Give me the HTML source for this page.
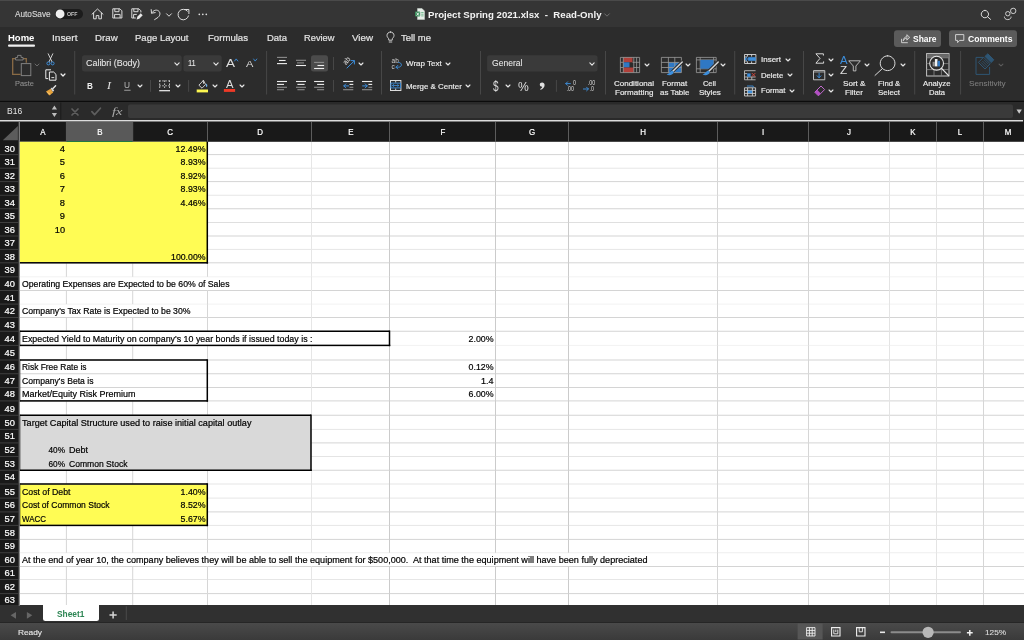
<!DOCTYPE html>
<html><head><meta charset="utf-8"><title>Project Spring 2021.xlsx</title><style>
html,body{margin:0;padding:0;background:#262626;}
body{width:1024px;height:640px;position:relative;overflow:hidden;font-family:"Liberation Sans",sans-serif;}
#r{position:absolute;left:0;top:0;width:1024px;height:640px;overflow:hidden;will-change:transform;}
#r>div,#r>svg,#r>span{position:absolute;display:block;}
.t{line-height:1;white-space:pre;}
svg{overflow:visible;}
</style></head><body><div id="r">
<svg style="left:0;top:0" width="1024" height="640" viewBox="0 0 1024 640"><rect x="0" y="0" width="1024" height="27" fill="#353535"/><rect x="0" y="0" width="1024" height="1" fill="#4a4a4a"/><rect x="0" y="27" width="1024" height="74" fill="#2c2c2c"/><rect x="0" y="100.8" width="1024" height="1.8" fill="#0c0c0c"/><rect x="0" y="102" width="1024" height="18" fill="#2a2a2a"/><rect x="0" y="120" width="1023" height="2.1" fill="#dcdcdc"/><rect x="0" y="121.5" width="1024" height="20.3" fill="#191919"/><rect x="0" y="141.5" width="19.5" height="464" fill="#191919"/><rect x="19.5" y="141.8" width="1005" height="463.2" fill="#ffffff"/><rect x="0" y="605" width="1024" height="18" fill="#303030"/><rect x="0" y="622.4" width="1024" height="1" fill="#202020"/></svg>
<div style="left:0px;top:623.3px;width:1024px;height:17px;background:#3b3b3b;background:linear-gradient(#4a4a4a,#3a3a3a);"></div>
<svg style="left:0;top:0" width="1024" height="640" viewBox="0 0 1024 640"><rect x="19.5" y="141.8" width="187.8" height="121.0" fill="#fffc54"/><rect x="19.5" y="415.25" width="291.5" height="55.0" fill="#d9d9d9"/><rect x="19.5" y="484" width="187.8" height="41.4" fill="#fffc54"/><rect x="207.3" y="154.1" width="103.9" height="1" fill="#d4d4d4"/><rect x="311.2" y="154.1" width="712.8" height="1" fill="#d4d4d4"/><rect x="207.3" y="167.7" width="103.9" height="1" fill="#e6e6e6"/><rect x="311.2" y="167.7" width="712.8" height="1" fill="#e6e6e6"/><rect x="207.3" y="181.1" width="103.9" height="1" fill="#d4d4d4"/><rect x="311.2" y="181.1" width="712.8" height="1" fill="#d4d4d4"/><rect x="207.3" y="194.75" width="103.9" height="1" fill="#e6e6e6"/><rect x="311.2" y="194.75" width="712.8" height="1" fill="#e6e6e6"/><rect x="207.3" y="208.25" width="103.9" height="1" fill="#d4d4d4"/><rect x="311.2" y="208.25" width="712.8" height="1" fill="#d4d4d4"/><rect x="207.3" y="222.0" width="103.9" height="1" fill="#dfdfdf"/><rect x="311.2" y="222.0" width="712.8" height="1" fill="#dfdfdf"/><rect x="207.3" y="235.5" width="103.9" height="1" fill="#d4d4d4"/><rect x="311.2" y="235.5" width="712.8" height="1" fill="#d4d4d4"/><rect x="207.3" y="248.9" width="103.9" height="1" fill="#e6e6e6"/><rect x="311.2" y="248.9" width="712.8" height="1" fill="#e6e6e6"/><rect x="19.5" y="262.3" width="187.8" height="1" fill="#d4d4d4"/><rect x="207.3" y="262.3" width="103.9" height="1" fill="#d4d4d4"/><rect x="311.2" y="262.3" width="712.8" height="1" fill="#d4d4d4"/><rect x="19.5" y="276.3" width="187.8" height="1" fill="#f2f2f2"/><rect x="207.3" y="276.3" width="103.9" height="1" fill="#f2f2f2"/><rect x="311.2" y="276.3" width="712.8" height="1" fill="#f2f2f2"/><rect x="19.5" y="290.0" width="187.8" height="1" fill="#d4d4d4"/><rect x="207.3" y="290.0" width="103.9" height="1" fill="#d4d4d4"/><rect x="311.2" y="290.0" width="712.8" height="1" fill="#d4d4d4"/><rect x="19.5" y="303.6" width="187.8" height="1" fill="#f2f2f2"/><rect x="207.3" y="303.6" width="103.9" height="1" fill="#f2f2f2"/><rect x="311.2" y="303.6" width="712.8" height="1" fill="#f2f2f2"/><rect x="19.5" y="317.0" width="187.8" height="1" fill="#d4d4d4"/><rect x="207.3" y="317.0" width="103.9" height="1" fill="#d4d4d4"/><rect x="311.2" y="317.0" width="712.8" height="1" fill="#d4d4d4"/><rect x="19.5" y="330.75" width="187.8" height="1" fill="#d4d4d4"/><rect x="207.3" y="330.75" width="103.9" height="1" fill="#d4d4d4"/><rect x="311.2" y="330.75" width="712.8" height="1" fill="#d4d4d4"/><rect x="19.5" y="344.9" width="187.8" height="1" fill="#f2f2f2"/><rect x="207.3" y="344.9" width="103.9" height="1" fill="#f2f2f2"/><rect x="311.2" y="344.9" width="712.8" height="1" fill="#f2f2f2"/><rect x="19.5" y="359.5" width="187.8" height="1" fill="#d4d4d4"/><rect x="207.3" y="359.5" width="103.9" height="1" fill="#d4d4d4"/><rect x="311.2" y="359.5" width="712.8" height="1" fill="#d4d4d4"/><rect x="19.5" y="373.25" width="187.8" height="1" fill="#d4d4d4"/><rect x="207.3" y="373.25" width="103.9" height="1" fill="#d4d4d4"/><rect x="311.2" y="373.25" width="712.8" height="1" fill="#d4d4d4"/><rect x="19.5" y="387.0" width="187.8" height="1" fill="#d4d4d4"/><rect x="207.3" y="387.0" width="103.9" height="1" fill="#d4d4d4"/><rect x="311.2" y="387.0" width="712.8" height="1" fill="#d4d4d4"/><rect x="19.5" y="400.4" width="187.8" height="1" fill="#d4d4d4"/><rect x="207.3" y="400.4" width="103.9" height="1" fill="#d4d4d4"/><rect x="311.2" y="400.4" width="712.8" height="1" fill="#d4d4d4"/><rect x="19.5" y="414.75" width="187.8" height="1" fill="#d4d4d4"/><rect x="207.3" y="414.75" width="103.9" height="1" fill="#d4d4d4"/><rect x="311.2" y="414.75" width="712.8" height="1" fill="#d4d4d4"/><rect x="311.2" y="428.9" width="712.8" height="1" fill="#e6e6e6"/><rect x="311.2" y="442.4" width="712.8" height="1" fill="#d4d4d4"/><rect x="311.2" y="456.0" width="712.8" height="1" fill="#e4e4e4"/><rect x="19.5" y="469.75" width="187.8" height="1" fill="#d4d4d4"/><rect x="207.3" y="469.75" width="103.9" height="1" fill="#d4d4d4"/><rect x="311.2" y="469.75" width="712.8" height="1" fill="#d4d4d4"/><rect x="19.5" y="483.5" width="187.8" height="1" fill="#e6e6e6"/><rect x="207.3" y="483.5" width="103.9" height="1" fill="#e6e6e6"/><rect x="311.2" y="483.5" width="712.8" height="1" fill="#e6e6e6"/><rect x="207.3" y="497.6" width="103.9" height="1" fill="#e6e6e6"/><rect x="311.2" y="497.6" width="712.8" height="1" fill="#e6e6e6"/><rect x="207.3" y="511.4" width="103.9" height="1" fill="#d4d4d4"/><rect x="311.2" y="511.4" width="712.8" height="1" fill="#d4d4d4"/><rect x="19.5" y="524.9" width="187.8" height="1" fill="#e6e6e6"/><rect x="207.3" y="524.9" width="103.9" height="1" fill="#e6e6e6"/><rect x="311.2" y="524.9" width="712.8" height="1" fill="#e6e6e6"/><rect x="19.5" y="538.9" width="187.8" height="1" fill="#d4d4d4"/><rect x="207.3" y="538.9" width="103.9" height="1" fill="#d4d4d4"/><rect x="311.2" y="538.9" width="712.8" height="1" fill="#d4d4d4"/><rect x="19.5" y="552.25" width="187.8" height="1" fill="#eeeeee"/><rect x="207.3" y="552.25" width="103.9" height="1" fill="#eeeeee"/><rect x="311.2" y="552.25" width="712.8" height="1" fill="#eeeeee"/><rect x="19.5" y="566.0" width="187.8" height="1" fill="#d4d4d4"/><rect x="207.3" y="566.0" width="103.9" height="1" fill="#d4d4d4"/><rect x="311.2" y="566.0" width="712.8" height="1" fill="#d4d4d4"/><rect x="19.5" y="579.0" width="187.8" height="1" fill="#e6e6e6"/><rect x="207.3" y="579.0" width="103.9" height="1" fill="#e6e6e6"/><rect x="311.2" y="579.0" width="712.8" height="1" fill="#e6e6e6"/><rect x="19.5" y="593.1" width="187.8" height="1" fill="#d4d4d4"/><rect x="207.3" y="593.1" width="103.9" height="1" fill="#d4d4d4"/><rect x="311.2" y="593.1" width="712.8" height="1" fill="#d4d4d4"/><rect x="65.9" y="262.8" width="1" height="14.0" fill="#d6d6d6"/><rect x="65.9" y="290.5" width="1" height="13.6" fill="#d6d6d6"/><rect x="65.9" y="317.5" width="1" height="13.75" fill="#d6d6d6"/><rect x="65.9" y="345.4" width="1" height="14.6" fill="#d6d6d6"/><rect x="65.9" y="400.9" width="1" height="14.35" fill="#d6d6d6"/><rect x="65.9" y="470.25" width="1" height="13.75" fill="#d6d6d6"/><rect x="65.9" y="525.4" width="1" height="14.0" fill="#d6d6d6"/><rect x="65.9" y="539.4" width="1" height="13.35" fill="#d6d6d6"/><rect x="65.9" y="566.5" width="1" height="13.0" fill="#d6d6d6"/><rect x="65.9" y="579.5" width="1" height="14.1" fill="#d6d6d6"/><rect x="65.9" y="593.6" width="1" height="11.4" fill="#d6d6d6"/><rect x="132.2" y="262.8" width="1" height="14.0" fill="#d6d6d6"/><rect x="132.2" y="290.5" width="1" height="13.6" fill="#d6d6d6"/><rect x="132.2" y="317.5" width="1" height="13.75" fill="#d6d6d6"/><rect x="132.2" y="345.4" width="1" height="14.6" fill="#d6d6d6"/><rect x="132.2" y="400.9" width="1" height="14.35" fill="#d6d6d6"/><rect x="132.2" y="470.25" width="1" height="13.75" fill="#d6d6d6"/><rect x="132.2" y="525.4" width="1" height="14.0" fill="#d6d6d6"/><rect x="132.2" y="539.4" width="1" height="13.35" fill="#d6d6d6"/><rect x="132.2" y="566.5" width="1" height="13.0" fill="#d6d6d6"/><rect x="132.2" y="579.5" width="1" height="14.1" fill="#d6d6d6"/><rect x="132.2" y="593.6" width="1" height="11.4" fill="#d6d6d6"/><rect x="207.0" y="262.8" width="1" height="14.0" fill="#d6d6d6"/><rect x="207.0" y="290.5" width="1" height="13.6" fill="#d6d6d6"/><rect x="207.0" y="304.1" width="1" height="13.4" fill="#d6d6d6"/><rect x="207.0" y="317.5" width="1" height="13.75" fill="#d6d6d6"/><rect x="207.0" y="345.4" width="1" height="14.6" fill="#d6d6d6"/><rect x="207.0" y="400.9" width="1" height="14.35" fill="#d6d6d6"/><rect x="207.0" y="470.25" width="1" height="13.75" fill="#d6d6d6"/><rect x="207.0" y="525.4" width="1" height="14.0" fill="#d6d6d6"/><rect x="207.0" y="539.4" width="1" height="13.35" fill="#d6d6d6"/><rect x="207.0" y="566.5" width="1" height="13.0" fill="#d6d6d6"/><rect x="207.0" y="579.5" width="1" height="14.1" fill="#d6d6d6"/><rect x="207.0" y="593.6" width="1" height="11.4" fill="#d6d6d6"/><rect x="311.0" y="141.8" width="1" height="12.8" fill="#e6e6e6"/><rect x="311.0" y="154.6" width="1" height="13.6" fill="#e6e6e6"/><rect x="311.0" y="168.2" width="1" height="13.4" fill="#e6e6e6"/><rect x="311.0" y="181.6" width="1" height="13.65" fill="#e6e6e6"/><rect x="311.0" y="195.25" width="1" height="13.5" fill="#e6e6e6"/><rect x="311.0" y="208.75" width="1" height="13.75" fill="#e6e6e6"/><rect x="311.0" y="222.5" width="1" height="13.5" fill="#e6e6e6"/><rect x="311.0" y="236" width="1" height="13.4" fill="#e6e6e6"/><rect x="311.0" y="249.4" width="1" height="13.4" fill="#e6e6e6"/><rect x="311.0" y="262.8" width="1" height="14.0" fill="#e6e6e6"/><rect x="311.0" y="276.8" width="1" height="13.7" fill="#e6e6e6"/><rect x="311.0" y="290.5" width="1" height="13.6" fill="#e6e6e6"/><rect x="311.0" y="304.1" width="1" height="13.4" fill="#e6e6e6"/><rect x="311.0" y="317.5" width="1" height="13.75" fill="#e6e6e6"/><rect x="311.0" y="345.4" width="1" height="14.6" fill="#e6e6e6"/><rect x="311.0" y="360" width="1" height="13.75" fill="#e6e6e6"/><rect x="311.0" y="373.75" width="1" height="13.75" fill="#e6e6e6"/><rect x="311.0" y="387.5" width="1" height="13.4" fill="#e6e6e6"/><rect x="311.0" y="400.9" width="1" height="14.35" fill="#e6e6e6"/><rect x="311.0" y="470.25" width="1" height="13.75" fill="#e6e6e6"/><rect x="311.0" y="484" width="1" height="14.1" fill="#e6e6e6"/><rect x="311.0" y="498.1" width="1" height="13.8" fill="#e6e6e6"/><rect x="311.0" y="511.9" width="1" height="13.5" fill="#e6e6e6"/><rect x="311.0" y="525.4" width="1" height="14.0" fill="#e6e6e6"/><rect x="311.0" y="539.4" width="1" height="13.35" fill="#e6e6e6"/><rect x="311.0" y="566.5" width="1" height="13.0" fill="#e6e6e6"/><rect x="311.0" y="579.5" width="1" height="14.1" fill="#e6e6e6"/><rect x="311.0" y="593.6" width="1" height="11.4" fill="#e6e6e6"/><rect x="389.0" y="141.8" width="1" height="12.8" fill="#cbcbcb"/><rect x="389.0" y="154.6" width="1" height="13.6" fill="#cbcbcb"/><rect x="389.0" y="168.2" width="1" height="13.4" fill="#cbcbcb"/><rect x="389.0" y="181.6" width="1" height="13.65" fill="#cbcbcb"/><rect x="389.0" y="195.25" width="1" height="13.5" fill="#cbcbcb"/><rect x="389.0" y="208.75" width="1" height="13.75" fill="#cbcbcb"/><rect x="389.0" y="222.5" width="1" height="13.5" fill="#cbcbcb"/><rect x="389.0" y="236" width="1" height="13.4" fill="#cbcbcb"/><rect x="389.0" y="249.4" width="1" height="13.4" fill="#cbcbcb"/><rect x="389.0" y="262.8" width="1" height="14.0" fill="#cbcbcb"/><rect x="389.0" y="276.8" width="1" height="13.7" fill="#cbcbcb"/><rect x="389.0" y="290.5" width="1" height="13.6" fill="#cbcbcb"/><rect x="389.0" y="304.1" width="1" height="13.4" fill="#cbcbcb"/><rect x="389.0" y="317.5" width="1" height="13.75" fill="#cbcbcb"/><rect x="389.0" y="345.4" width="1" height="14.6" fill="#cbcbcb"/><rect x="389.0" y="360" width="1" height="13.75" fill="#cbcbcb"/><rect x="389.0" y="373.75" width="1" height="13.75" fill="#cbcbcb"/><rect x="389.0" y="387.5" width="1" height="13.4" fill="#cbcbcb"/><rect x="389.0" y="400.9" width="1" height="14.35" fill="#cbcbcb"/><rect x="389.0" y="415.25" width="1" height="14.15" fill="#cbcbcb"/><rect x="389.0" y="429.4" width="1" height="13.5" fill="#cbcbcb"/><rect x="389.0" y="442.9" width="1" height="13.6" fill="#cbcbcb"/><rect x="389.0" y="456.5" width="1" height="13.75" fill="#cbcbcb"/><rect x="389.0" y="470.25" width="1" height="13.75" fill="#cbcbcb"/><rect x="389.0" y="484" width="1" height="14.1" fill="#cbcbcb"/><rect x="389.0" y="498.1" width="1" height="13.8" fill="#cbcbcb"/><rect x="389.0" y="511.9" width="1" height="13.5" fill="#cbcbcb"/><rect x="389.0" y="525.4" width="1" height="14.0" fill="#cbcbcb"/><rect x="389.0" y="539.4" width="1" height="13.35" fill="#cbcbcb"/><rect x="389.0" y="566.5" width="1" height="13.0" fill="#cbcbcb"/><rect x="389.0" y="579.5" width="1" height="14.1" fill="#cbcbcb"/><rect x="389.0" y="593.6" width="1" height="11.4" fill="#cbcbcb"/><rect x="495.0" y="141.8" width="1" height="12.8" fill="#cbcbcb"/><rect x="495.0" y="154.6" width="1" height="13.6" fill="#cbcbcb"/><rect x="495.0" y="168.2" width="1" height="13.4" fill="#cbcbcb"/><rect x="495.0" y="181.6" width="1" height="13.65" fill="#cbcbcb"/><rect x="495.0" y="195.25" width="1" height="13.5" fill="#cbcbcb"/><rect x="495.0" y="208.75" width="1" height="13.75" fill="#cbcbcb"/><rect x="495.0" y="222.5" width="1" height="13.5" fill="#cbcbcb"/><rect x="495.0" y="236" width="1" height="13.4" fill="#cbcbcb"/><rect x="495.0" y="249.4" width="1" height="13.4" fill="#cbcbcb"/><rect x="495.0" y="262.8" width="1" height="14.0" fill="#cbcbcb"/><rect x="495.0" y="276.8" width="1" height="13.7" fill="#cbcbcb"/><rect x="495.0" y="290.5" width="1" height="13.6" fill="#cbcbcb"/><rect x="495.0" y="304.1" width="1" height="13.4" fill="#cbcbcb"/><rect x="495.0" y="317.5" width="1" height="13.75" fill="#cbcbcb"/><rect x="495.0" y="331.25" width="1" height="14.15" fill="#cbcbcb"/><rect x="495.0" y="345.4" width="1" height="14.6" fill="#cbcbcb"/><rect x="495.0" y="360" width="1" height="13.75" fill="#cbcbcb"/><rect x="495.0" y="373.75" width="1" height="13.75" fill="#cbcbcb"/><rect x="495.0" y="387.5" width="1" height="13.4" fill="#cbcbcb"/><rect x="495.0" y="400.9" width="1" height="14.35" fill="#cbcbcb"/><rect x="495.0" y="415.25" width="1" height="14.15" fill="#cbcbcb"/><rect x="495.0" y="429.4" width="1" height="13.5" fill="#cbcbcb"/><rect x="495.0" y="442.9" width="1" height="13.6" fill="#cbcbcb"/><rect x="495.0" y="456.5" width="1" height="13.75" fill="#cbcbcb"/><rect x="495.0" y="470.25" width="1" height="13.75" fill="#cbcbcb"/><rect x="495.0" y="484" width="1" height="14.1" fill="#cbcbcb"/><rect x="495.0" y="498.1" width="1" height="13.8" fill="#cbcbcb"/><rect x="495.0" y="511.9" width="1" height="13.5" fill="#cbcbcb"/><rect x="495.0" y="525.4" width="1" height="14.0" fill="#cbcbcb"/><rect x="495.0" y="539.4" width="1" height="13.35" fill="#cbcbcb"/><rect x="495.0" y="566.5" width="1" height="13.0" fill="#cbcbcb"/><rect x="495.0" y="579.5" width="1" height="14.1" fill="#cbcbcb"/><rect x="495.0" y="593.6" width="1" height="11.4" fill="#cbcbcb"/><rect x="568.0" y="141.8" width="1" height="12.8" fill="#cbcbcb"/><rect x="568.0" y="154.6" width="1" height="13.6" fill="#cbcbcb"/><rect x="568.0" y="168.2" width="1" height="13.4" fill="#cbcbcb"/><rect x="568.0" y="181.6" width="1" height="13.65" fill="#cbcbcb"/><rect x="568.0" y="195.25" width="1" height="13.5" fill="#cbcbcb"/><rect x="568.0" y="208.75" width="1" height="13.75" fill="#cbcbcb"/><rect x="568.0" y="222.5" width="1" height="13.5" fill="#cbcbcb"/><rect x="568.0" y="236" width="1" height="13.4" fill="#cbcbcb"/><rect x="568.0" y="249.4" width="1" height="13.4" fill="#cbcbcb"/><rect x="568.0" y="262.8" width="1" height="14.0" fill="#cbcbcb"/><rect x="568.0" y="276.8" width="1" height="13.7" fill="#cbcbcb"/><rect x="568.0" y="290.5" width="1" height="13.6" fill="#cbcbcb"/><rect x="568.0" y="304.1" width="1" height="13.4" fill="#cbcbcb"/><rect x="568.0" y="317.5" width="1" height="13.75" fill="#cbcbcb"/><rect x="568.0" y="331.25" width="1" height="14.15" fill="#cbcbcb"/><rect x="568.0" y="345.4" width="1" height="14.6" fill="#cbcbcb"/><rect x="568.0" y="360" width="1" height="13.75" fill="#cbcbcb"/><rect x="568.0" y="373.75" width="1" height="13.75" fill="#cbcbcb"/><rect x="568.0" y="387.5" width="1" height="13.4" fill="#cbcbcb"/><rect x="568.0" y="400.9" width="1" height="14.35" fill="#cbcbcb"/><rect x="568.0" y="415.25" width="1" height="14.15" fill="#cbcbcb"/><rect x="568.0" y="429.4" width="1" height="13.5" fill="#cbcbcb"/><rect x="568.0" y="442.9" width="1" height="13.6" fill="#cbcbcb"/><rect x="568.0" y="456.5" width="1" height="13.75" fill="#cbcbcb"/><rect x="568.0" y="470.25" width="1" height="13.75" fill="#cbcbcb"/><rect x="568.0" y="484" width="1" height="14.1" fill="#cbcbcb"/><rect x="568.0" y="498.1" width="1" height="13.8" fill="#cbcbcb"/><rect x="568.0" y="511.9" width="1" height="13.5" fill="#cbcbcb"/><rect x="568.0" y="525.4" width="1" height="14.0" fill="#cbcbcb"/><rect x="568.0" y="539.4" width="1" height="13.35" fill="#cbcbcb"/><rect x="568.0" y="566.5" width="1" height="13.0" fill="#cbcbcb"/><rect x="568.0" y="579.5" width="1" height="14.1" fill="#cbcbcb"/><rect x="568.0" y="593.6" width="1" height="11.4" fill="#cbcbcb"/><rect x="717.0" y="141.8" width="1" height="12.8" fill="#d6d6d6"/><rect x="717.0" y="154.6" width="1" height="13.6" fill="#d6d6d6"/><rect x="717.0" y="168.2" width="1" height="13.4" fill="#d6d6d6"/><rect x="717.0" y="181.6" width="1" height="13.65" fill="#d6d6d6"/><rect x="717.0" y="195.25" width="1" height="13.5" fill="#d6d6d6"/><rect x="717.0" y="208.75" width="1" height="13.75" fill="#d6d6d6"/><rect x="717.0" y="222.5" width="1" height="13.5" fill="#d6d6d6"/><rect x="717.0" y="236" width="1" height="13.4" fill="#d6d6d6"/><rect x="717.0" y="249.4" width="1" height="13.4" fill="#d6d6d6"/><rect x="717.0" y="262.8" width="1" height="14.0" fill="#d6d6d6"/><rect x="717.0" y="276.8" width="1" height="13.7" fill="#d6d6d6"/><rect x="717.0" y="290.5" width="1" height="13.6" fill="#d6d6d6"/><rect x="717.0" y="304.1" width="1" height="13.4" fill="#d6d6d6"/><rect x="717.0" y="317.5" width="1" height="13.75" fill="#d6d6d6"/><rect x="717.0" y="331.25" width="1" height="14.15" fill="#d6d6d6"/><rect x="717.0" y="345.4" width="1" height="14.6" fill="#d6d6d6"/><rect x="717.0" y="360" width="1" height="13.75" fill="#d6d6d6"/><rect x="717.0" y="373.75" width="1" height="13.75" fill="#d6d6d6"/><rect x="717.0" y="387.5" width="1" height="13.4" fill="#d6d6d6"/><rect x="717.0" y="400.9" width="1" height="14.35" fill="#d6d6d6"/><rect x="717.0" y="415.25" width="1" height="14.15" fill="#d6d6d6"/><rect x="717.0" y="429.4" width="1" height="13.5" fill="#d6d6d6"/><rect x="717.0" y="442.9" width="1" height="13.6" fill="#d6d6d6"/><rect x="717.0" y="456.5" width="1" height="13.75" fill="#d6d6d6"/><rect x="717.0" y="470.25" width="1" height="13.75" fill="#d6d6d6"/><rect x="717.0" y="484" width="1" height="14.1" fill="#d6d6d6"/><rect x="717.0" y="498.1" width="1" height="13.8" fill="#d6d6d6"/><rect x="717.0" y="511.9" width="1" height="13.5" fill="#d6d6d6"/><rect x="717.0" y="525.4" width="1" height="14.0" fill="#d6d6d6"/><rect x="717.0" y="539.4" width="1" height="13.35" fill="#d6d6d6"/><rect x="717.0" y="552.75" width="1" height="13.75" fill="#d6d6d6"/><rect x="717.0" y="566.5" width="1" height="13.0" fill="#d6d6d6"/><rect x="717.0" y="579.5" width="1" height="14.1" fill="#d6d6d6"/><rect x="717.0" y="593.6" width="1" height="11.4" fill="#d6d6d6"/><rect x="808.0" y="141.8" width="1" height="12.8" fill="#d6d6d6"/><rect x="808.0" y="154.6" width="1" height="13.6" fill="#d6d6d6"/><rect x="808.0" y="168.2" width="1" height="13.4" fill="#d6d6d6"/><rect x="808.0" y="181.6" width="1" height="13.65" fill="#d6d6d6"/><rect x="808.0" y="195.25" width="1" height="13.5" fill="#d6d6d6"/><rect x="808.0" y="208.75" width="1" height="13.75" fill="#d6d6d6"/><rect x="808.0" y="222.5" width="1" height="13.5" fill="#d6d6d6"/><rect x="808.0" y="236" width="1" height="13.4" fill="#d6d6d6"/><rect x="808.0" y="249.4" width="1" height="13.4" fill="#d6d6d6"/><rect x="808.0" y="262.8" width="1" height="14.0" fill="#d6d6d6"/><rect x="808.0" y="276.8" width="1" height="13.7" fill="#d6d6d6"/><rect x="808.0" y="290.5" width="1" height="13.6" fill="#d6d6d6"/><rect x="808.0" y="304.1" width="1" height="13.4" fill="#d6d6d6"/><rect x="808.0" y="317.5" width="1" height="13.75" fill="#d6d6d6"/><rect x="808.0" y="331.25" width="1" height="14.15" fill="#d6d6d6"/><rect x="808.0" y="345.4" width="1" height="14.6" fill="#d6d6d6"/><rect x="808.0" y="360" width="1" height="13.75" fill="#d6d6d6"/><rect x="808.0" y="373.75" width="1" height="13.75" fill="#d6d6d6"/><rect x="808.0" y="387.5" width="1" height="13.4" fill="#d6d6d6"/><rect x="808.0" y="400.9" width="1" height="14.35" fill="#d6d6d6"/><rect x="808.0" y="415.25" width="1" height="14.15" fill="#d6d6d6"/><rect x="808.0" y="429.4" width="1" height="13.5" fill="#d6d6d6"/><rect x="808.0" y="442.9" width="1" height="13.6" fill="#d6d6d6"/><rect x="808.0" y="456.5" width="1" height="13.75" fill="#d6d6d6"/><rect x="808.0" y="470.25" width="1" height="13.75" fill="#d6d6d6"/><rect x="808.0" y="484" width="1" height="14.1" fill="#d6d6d6"/><rect x="808.0" y="498.1" width="1" height="13.8" fill="#d6d6d6"/><rect x="808.0" y="511.9" width="1" height="13.5" fill="#d6d6d6"/><rect x="808.0" y="525.4" width="1" height="14.0" fill="#d6d6d6"/><rect x="808.0" y="539.4" width="1" height="13.35" fill="#d6d6d6"/><rect x="808.0" y="552.75" width="1" height="13.75" fill="#d6d6d6"/><rect x="808.0" y="566.5" width="1" height="13.0" fill="#d6d6d6"/><rect x="808.0" y="579.5" width="1" height="14.1" fill="#d6d6d6"/><rect x="808.0" y="593.6" width="1" height="11.4" fill="#d6d6d6"/><rect x="889.0" y="141.8" width="1" height="12.8" fill="#e4e4e4"/><rect x="889.0" y="154.6" width="1" height="13.6" fill="#e4e4e4"/><rect x="889.0" y="168.2" width="1" height="13.4" fill="#e4e4e4"/><rect x="889.0" y="181.6" width="1" height="13.65" fill="#e4e4e4"/><rect x="889.0" y="195.25" width="1" height="13.5" fill="#e4e4e4"/><rect x="889.0" y="208.75" width="1" height="13.75" fill="#e4e4e4"/><rect x="889.0" y="222.5" width="1" height="13.5" fill="#e4e4e4"/><rect x="889.0" y="236" width="1" height="13.4" fill="#e4e4e4"/><rect x="889.0" y="249.4" width="1" height="13.4" fill="#e4e4e4"/><rect x="889.0" y="262.8" width="1" height="14.0" fill="#e4e4e4"/><rect x="889.0" y="276.8" width="1" height="13.7" fill="#e4e4e4"/><rect x="889.0" y="290.5" width="1" height="13.6" fill="#e4e4e4"/><rect x="889.0" y="304.1" width="1" height="13.4" fill="#e4e4e4"/><rect x="889.0" y="317.5" width="1" height="13.75" fill="#e4e4e4"/><rect x="889.0" y="331.25" width="1" height="14.15" fill="#e4e4e4"/><rect x="889.0" y="345.4" width="1" height="14.6" fill="#e4e4e4"/><rect x="889.0" y="360" width="1" height="13.75" fill="#e4e4e4"/><rect x="889.0" y="373.75" width="1" height="13.75" fill="#e4e4e4"/><rect x="889.0" y="387.5" width="1" height="13.4" fill="#e4e4e4"/><rect x="889.0" y="400.9" width="1" height="14.35" fill="#e4e4e4"/><rect x="889.0" y="415.25" width="1" height="14.15" fill="#e4e4e4"/><rect x="889.0" y="429.4" width="1" height="13.5" fill="#e4e4e4"/><rect x="889.0" y="442.9" width="1" height="13.6" fill="#e4e4e4"/><rect x="889.0" y="456.5" width="1" height="13.75" fill="#e4e4e4"/><rect x="889.0" y="470.25" width="1" height="13.75" fill="#e4e4e4"/><rect x="889.0" y="484" width="1" height="14.1" fill="#e4e4e4"/><rect x="889.0" y="498.1" width="1" height="13.8" fill="#e4e4e4"/><rect x="889.0" y="511.9" width="1" height="13.5" fill="#e4e4e4"/><rect x="889.0" y="525.4" width="1" height="14.0" fill="#e4e4e4"/><rect x="889.0" y="539.4" width="1" height="13.35" fill="#e4e4e4"/><rect x="889.0" y="552.75" width="1" height="13.75" fill="#e4e4e4"/><rect x="889.0" y="566.5" width="1" height="13.0" fill="#e4e4e4"/><rect x="889.0" y="579.5" width="1" height="14.1" fill="#e4e4e4"/><rect x="889.0" y="593.6" width="1" height="11.4" fill="#e4e4e4"/><rect x="936.0" y="141.8" width="1" height="12.8" fill="#e4e4e4"/><rect x="936.0" y="154.6" width="1" height="13.6" fill="#e4e4e4"/><rect x="936.0" y="168.2" width="1" height="13.4" fill="#e4e4e4"/><rect x="936.0" y="181.6" width="1" height="13.65" fill="#e4e4e4"/><rect x="936.0" y="195.25" width="1" height="13.5" fill="#e4e4e4"/><rect x="936.0" y="208.75" width="1" height="13.75" fill="#e4e4e4"/><rect x="936.0" y="222.5" width="1" height="13.5" fill="#e4e4e4"/><rect x="936.0" y="236" width="1" height="13.4" fill="#e4e4e4"/><rect x="936.0" y="249.4" width="1" height="13.4" fill="#e4e4e4"/><rect x="936.0" y="262.8" width="1" height="14.0" fill="#e4e4e4"/><rect x="936.0" y="276.8" width="1" height="13.7" fill="#e4e4e4"/><rect x="936.0" y="290.5" width="1" height="13.6" fill="#e4e4e4"/><rect x="936.0" y="304.1" width="1" height="13.4" fill="#e4e4e4"/><rect x="936.0" y="317.5" width="1" height="13.75" fill="#e4e4e4"/><rect x="936.0" y="331.25" width="1" height="14.15" fill="#e4e4e4"/><rect x="936.0" y="345.4" width="1" height="14.6" fill="#e4e4e4"/><rect x="936.0" y="360" width="1" height="13.75" fill="#e4e4e4"/><rect x="936.0" y="373.75" width="1" height="13.75" fill="#e4e4e4"/><rect x="936.0" y="387.5" width="1" height="13.4" fill="#e4e4e4"/><rect x="936.0" y="400.9" width="1" height="14.35" fill="#e4e4e4"/><rect x="936.0" y="415.25" width="1" height="14.15" fill="#e4e4e4"/><rect x="936.0" y="429.4" width="1" height="13.5" fill="#e4e4e4"/><rect x="936.0" y="442.9" width="1" height="13.6" fill="#e4e4e4"/><rect x="936.0" y="456.5" width="1" height="13.75" fill="#e4e4e4"/><rect x="936.0" y="470.25" width="1" height="13.75" fill="#e4e4e4"/><rect x="936.0" y="484" width="1" height="14.1" fill="#e4e4e4"/><rect x="936.0" y="498.1" width="1" height="13.8" fill="#e4e4e4"/><rect x="936.0" y="511.9" width="1" height="13.5" fill="#e4e4e4"/><rect x="936.0" y="525.4" width="1" height="14.0" fill="#e4e4e4"/><rect x="936.0" y="539.4" width="1" height="13.35" fill="#e4e4e4"/><rect x="936.0" y="552.75" width="1" height="13.75" fill="#e4e4e4"/><rect x="936.0" y="566.5" width="1" height="13.0" fill="#e4e4e4"/><rect x="936.0" y="579.5" width="1" height="14.1" fill="#e4e4e4"/><rect x="936.0" y="593.6" width="1" height="11.4" fill="#e4e4e4"/><rect x="983.0" y="141.8" width="1" height="12.8" fill="#d6d6d6"/><rect x="983.0" y="154.6" width="1" height="13.6" fill="#d6d6d6"/><rect x="983.0" y="168.2" width="1" height="13.4" fill="#d6d6d6"/><rect x="983.0" y="181.6" width="1" height="13.65" fill="#d6d6d6"/><rect x="983.0" y="195.25" width="1" height="13.5" fill="#d6d6d6"/><rect x="983.0" y="208.75" width="1" height="13.75" fill="#d6d6d6"/><rect x="983.0" y="222.5" width="1" height="13.5" fill="#d6d6d6"/><rect x="983.0" y="236" width="1" height="13.4" fill="#d6d6d6"/><rect x="983.0" y="249.4" width="1" height="13.4" fill="#d6d6d6"/><rect x="983.0" y="262.8" width="1" height="14.0" fill="#d6d6d6"/><rect x="983.0" y="276.8" width="1" height="13.7" fill="#d6d6d6"/><rect x="983.0" y="290.5" width="1" height="13.6" fill="#d6d6d6"/><rect x="983.0" y="304.1" width="1" height="13.4" fill="#d6d6d6"/><rect x="983.0" y="317.5" width="1" height="13.75" fill="#d6d6d6"/><rect x="983.0" y="331.25" width="1" height="14.15" fill="#d6d6d6"/><rect x="983.0" y="345.4" width="1" height="14.6" fill="#d6d6d6"/><rect x="983.0" y="360" width="1" height="13.75" fill="#d6d6d6"/><rect x="983.0" y="373.75" width="1" height="13.75" fill="#d6d6d6"/><rect x="983.0" y="387.5" width="1" height="13.4" fill="#d6d6d6"/><rect x="983.0" y="400.9" width="1" height="14.35" fill="#d6d6d6"/><rect x="983.0" y="415.25" width="1" height="14.15" fill="#d6d6d6"/><rect x="983.0" y="429.4" width="1" height="13.5" fill="#d6d6d6"/><rect x="983.0" y="442.9" width="1" height="13.6" fill="#d6d6d6"/><rect x="983.0" y="456.5" width="1" height="13.75" fill="#d6d6d6"/><rect x="983.0" y="470.25" width="1" height="13.75" fill="#d6d6d6"/><rect x="983.0" y="484" width="1" height="14.1" fill="#d6d6d6"/><rect x="983.0" y="498.1" width="1" height="13.8" fill="#d6d6d6"/><rect x="983.0" y="511.9" width="1" height="13.5" fill="#d6d6d6"/><rect x="983.0" y="525.4" width="1" height="14.0" fill="#d6d6d6"/><rect x="983.0" y="539.4" width="1" height="13.35" fill="#d6d6d6"/><rect x="983.0" y="552.75" width="1" height="13.75" fill="#d6d6d6"/><rect x="983.0" y="566.5" width="1" height="13.0" fill="#d6d6d6"/><rect x="983.0" y="579.5" width="1" height="14.1" fill="#d6d6d6"/><rect x="983.0" y="593.6" width="1" height="11.4" fill="#d6d6d6"/><rect x="19.5" y="262.05" width="188.55" height="1.5" fill="#000"/><rect x="206.55" y="141.05" width="1.5" height="122.5" fill="#000"/><rect x="19.5" y="330.5" width="370.0" height="1.5" fill="#000"/><rect x="19.5" y="344.65" width="370.75" height="1.5" fill="#000"/><rect x="18.75" y="330.5" width="1.5" height="15.65" fill="#000"/><rect x="388.75" y="330.5" width="1.5" height="15.65" fill="#000"/><rect x="19.5" y="359.25" width="187.8" height="1.5" fill="#000"/><rect x="19.5" y="400.15" width="188.55" height="1.5" fill="#000"/><rect x="18.75" y="359.25" width="1.5" height="42.4" fill="#000"/><rect x="206.55" y="359.25" width="1.5" height="42.4" fill="#000"/><rect x="19.5" y="414.5" width="291.5" height="1.5" fill="#000"/><rect x="19.5" y="469.5" width="292.25" height="1.5" fill="#000"/><rect x="18.75" y="414.5" width="1.5" height="56.5" fill="#000"/><rect x="310.25" y="414.5" width="1.5" height="56.5" fill="#000"/><rect x="19.5" y="483.25" width="187.8" height="1.5" fill="#000"/><rect x="19.5" y="524.65" width="188.55" height="1.5" fill="#000"/><rect x="18.75" y="483.25" width="1.5" height="42.9" fill="#000"/><rect x="206.55" y="483.25" width="1.5" height="42.9" fill="#000"/><rect x="66.4" y="122" width="66.3" height="19.8" fill="#595959"/><rect x="66.4" y="141" width="66.3" height="0.9" fill="#1e7b45"/><rect x="19.0" y="122" width="1" height="19.8" fill="#5c5c5c"/><rect x="65.9" y="122" width="1" height="19.8" fill="#5c5c5c"/><rect x="132.2" y="122" width="1" height="19.8" fill="#5c5c5c"/><rect x="207.0" y="122" width="1" height="19.8" fill="#5c5c5c"/><rect x="311.0" y="122" width="1" height="19.8" fill="#5c5c5c"/><rect x="389.0" y="122" width="1" height="19.8" fill="#5c5c5c"/><rect x="495.0" y="122" width="1" height="19.8" fill="#5c5c5c"/><rect x="568.0" y="122" width="1" height="19.8" fill="#5c5c5c"/><rect x="717.0" y="122" width="1" height="19.8" fill="#5c5c5c"/><rect x="808.0" y="122" width="1" height="19.8" fill="#5c5c5c"/><rect x="889.0" y="122" width="1" height="19.8" fill="#5c5c5c"/><rect x="936.0" y="122" width="1" height="19.8" fill="#5c5c5c"/><rect x="983.0" y="122" width="1" height="19.8" fill="#5c5c5c"/><rect x="18.7" y="122" width="1" height="484" fill="#8a8a8a"/></svg>
<svg style="left:0px;top:121.5px;" width="19.5" height="20" viewBox="0 0 19.5 20"><path d="M2.8 18.3 L17.9 18.3 L17.9 3.9 Z" fill="#5c5c5c"/></svg>
<span class="t" style="font-family:'Liberation Sans', sans-serif;font-size:8.8px;color:#ffffff;top:128px;-webkit-text-stroke:0.22px #ffffff;left:-57.05px;width:200px;text-align:center;transform:scaleX(0.9000);transform-origin:center;">A</span>
<span class="t" style="font-family:'Liberation Sans', sans-serif;font-size:8.8px;color:#ffffff;top:128px;-webkit-text-stroke:0.22px #ffffff;left:-0.45px;width:200px;text-align:center;transform:scaleX(0.9000);transform-origin:center;">B</span>
<span class="t" style="font-family:'Liberation Sans', sans-serif;font-size:8.8px;color:#ffffff;top:128px;-webkit-text-stroke:0.22px #ffffff;left:70.10px;width:200px;text-align:center;transform:scaleX(0.9000);transform-origin:center;">C</span>
<span class="t" style="font-family:'Liberation Sans', sans-serif;font-size:8.8px;color:#ffffff;top:128px;-webkit-text-stroke:0.22px #ffffff;left:159.50px;width:200px;text-align:center;transform:scaleX(0.9000);transform-origin:center;">D</span>
<span class="t" style="font-family:'Liberation Sans', sans-serif;font-size:8.8px;color:#ffffff;top:128px;-webkit-text-stroke:0.22px #ffffff;left:250.50px;width:200px;text-align:center;transform:scaleX(0.9000);transform-origin:center;">E</span>
<span class="t" style="font-family:'Liberation Sans', sans-serif;font-size:8.8px;color:#ffffff;top:128px;-webkit-text-stroke:0.22px #ffffff;left:342.50px;width:200px;text-align:center;transform:scaleX(0.9000);transform-origin:center;">F</span>
<span class="t" style="font-family:'Liberation Sans', sans-serif;font-size:8.8px;color:#ffffff;top:128px;-webkit-text-stroke:0.22px #ffffff;left:432.00px;width:200px;text-align:center;transform:scaleX(0.9000);transform-origin:center;">G</span>
<span class="t" style="font-family:'Liberation Sans', sans-serif;font-size:8.8px;color:#ffffff;top:128px;-webkit-text-stroke:0.22px #ffffff;left:543.00px;width:200px;text-align:center;transform:scaleX(0.9000);transform-origin:center;">H</span>
<span class="t" style="font-family:'Liberation Sans', sans-serif;font-size:8.8px;color:#ffffff;top:128px;-webkit-text-stroke:0.22px #ffffff;left:663.00px;width:200px;text-align:center;transform:scaleX(0.9000);transform-origin:center;">I</span>
<span class="t" style="font-family:'Liberation Sans', sans-serif;font-size:8.8px;color:#ffffff;top:128px;-webkit-text-stroke:0.22px #ffffff;left:749.00px;width:200px;text-align:center;transform:scaleX(0.9000);transform-origin:center;">J</span>
<span class="t" style="font-family:'Liberation Sans', sans-serif;font-size:8.8px;color:#ffffff;top:128px;-webkit-text-stroke:0.22px #ffffff;left:813.00px;width:200px;text-align:center;transform:scaleX(0.9000);transform-origin:center;">K</span>
<span class="t" style="font-family:'Liberation Sans', sans-serif;font-size:8.8px;color:#ffffff;top:128px;-webkit-text-stroke:0.22px #ffffff;left:860.00px;width:200px;text-align:center;transform:scaleX(0.9000);transform-origin:center;">L</span>
<span class="t" style="font-family:'Liberation Sans', sans-serif;font-size:8.8px;color:#ffffff;top:128px;-webkit-text-stroke:0.22px #ffffff;left:907.50px;width:200px;text-align:center;transform:scaleX(0.9000);transform-origin:center;">M</span>
<span class="t" style="font-family:'Liberation Sans', sans-serif;font-size:9.0px;color:#ffffff;top:145px;-webkit-text-stroke:0.2px #ffffff;right:1008.70px;transform:scaleX(1.0384);transform-origin:right;">30</span>
<svg style="left:0;top:0" width="1024" height="640" viewBox="0 0 1024 640"><rect x="0" y="154.1" width="19" height="1" fill="#3f3f3f"/></svg>
<span class="t" style="font-family:'Liberation Sans', sans-serif;font-size:9.0px;color:#ffffff;top:158px;-webkit-text-stroke:0.2px #ffffff;right:1008.70px;transform:scaleX(1.0384);transform-origin:right;">31</span>
<svg style="left:0;top:0" width="1024" height="640" viewBox="0 0 1024 640"><rect x="0" y="167.7" width="19" height="1" fill="#3f3f3f"/></svg>
<span class="t" style="font-family:'Liberation Sans', sans-serif;font-size:9.0px;color:#ffffff;top:172px;-webkit-text-stroke:0.2px #ffffff;right:1008.70px;transform:scaleX(1.0384);transform-origin:right;">32</span>
<svg style="left:0;top:0" width="1024" height="640" viewBox="0 0 1024 640"><rect x="0" y="181.1" width="19" height="1" fill="#3f3f3f"/></svg>
<span class="t" style="font-family:'Liberation Sans', sans-serif;font-size:9.0px;color:#ffffff;top:185px;-webkit-text-stroke:0.2px #ffffff;right:1008.70px;transform:scaleX(1.0384);transform-origin:right;">33</span>
<svg style="left:0;top:0" width="1024" height="640" viewBox="0 0 1024 640"><rect x="0" y="194.75" width="19" height="1" fill="#3f3f3f"/></svg>
<span class="t" style="font-family:'Liberation Sans', sans-serif;font-size:9.0px;color:#ffffff;top:199px;-webkit-text-stroke:0.2px #ffffff;right:1008.70px;transform:scaleX(1.0384);transform-origin:right;">34</span>
<svg style="left:0;top:0" width="1024" height="640" viewBox="0 0 1024 640"><rect x="0" y="208.25" width="19" height="1" fill="#3f3f3f"/></svg>
<span class="t" style="font-family:'Liberation Sans', sans-serif;font-size:9.0px;color:#ffffff;top:212px;-webkit-text-stroke:0.2px #ffffff;right:1008.70px;transform:scaleX(1.0384);transform-origin:right;">35</span>
<svg style="left:0;top:0" width="1024" height="640" viewBox="0 0 1024 640"><rect x="0" y="222.0" width="19" height="1" fill="#3f3f3f"/></svg>
<span class="t" style="font-family:'Liberation Sans', sans-serif;font-size:9.0px;color:#ffffff;top:226px;-webkit-text-stroke:0.2px #ffffff;right:1008.70px;transform:scaleX(1.0384);transform-origin:right;">36</span>
<svg style="left:0;top:0" width="1024" height="640" viewBox="0 0 1024 640"><rect x="0" y="235.5" width="19" height="1" fill="#3f3f3f"/></svg>
<span class="t" style="font-family:'Liberation Sans', sans-serif;font-size:9.0px;color:#ffffff;top:239px;-webkit-text-stroke:0.2px #ffffff;right:1008.70px;transform:scaleX(1.0384);transform-origin:right;">37</span>
<svg style="left:0;top:0" width="1024" height="640" viewBox="0 0 1024 640"><rect x="0" y="248.9" width="19" height="1" fill="#3f3f3f"/></svg>
<span class="t" style="font-family:'Liberation Sans', sans-serif;font-size:9.0px;color:#ffffff;top:253px;-webkit-text-stroke:0.2px #ffffff;right:1008.70px;transform:scaleX(1.0384);transform-origin:right;">38</span>
<svg style="left:0;top:0" width="1024" height="640" viewBox="0 0 1024 640"><rect x="0" y="262.3" width="19" height="1" fill="#3f3f3f"/></svg>
<span class="t" style="font-family:'Liberation Sans', sans-serif;font-size:9.0px;color:#ffffff;top:266px;-webkit-text-stroke:0.2px #ffffff;right:1008.70px;transform:scaleX(1.0384);transform-origin:right;">39</span>
<svg style="left:0;top:0" width="1024" height="640" viewBox="0 0 1024 640"><rect x="0" y="276.3" width="19" height="1" fill="#3f3f3f"/></svg>
<span class="t" style="font-family:'Liberation Sans', sans-serif;font-size:9.0px;color:#ffffff;top:280px;-webkit-text-stroke:0.2px #ffffff;right:1008.70px;transform:scaleX(1.0384);transform-origin:right;">40</span>
<svg style="left:0;top:0" width="1024" height="640" viewBox="0 0 1024 640"><rect x="0" y="290.0" width="19" height="1" fill="#3f3f3f"/></svg>
<span class="t" style="font-family:'Liberation Sans', sans-serif;font-size:9.0px;color:#ffffff;top:294px;-webkit-text-stroke:0.2px #ffffff;right:1008.70px;transform:scaleX(1.0384);transform-origin:right;">41</span>
<svg style="left:0;top:0" width="1024" height="640" viewBox="0 0 1024 640"><rect x="0" y="303.6" width="19" height="1" fill="#3f3f3f"/></svg>
<span class="t" style="font-family:'Liberation Sans', sans-serif;font-size:9.0px;color:#ffffff;top:307px;-webkit-text-stroke:0.2px #ffffff;right:1008.70px;transform:scaleX(1.0384);transform-origin:right;">42</span>
<svg style="left:0;top:0" width="1024" height="640" viewBox="0 0 1024 640"><rect x="0" y="317.0" width="19" height="1" fill="#3f3f3f"/></svg>
<span class="t" style="font-family:'Liberation Sans', sans-serif;font-size:9.0px;color:#ffffff;top:321px;-webkit-text-stroke:0.2px #ffffff;right:1008.70px;transform:scaleX(1.0384);transform-origin:right;">43</span>
<svg style="left:0;top:0" width="1024" height="640" viewBox="0 0 1024 640"><rect x="0" y="330.75" width="19" height="1" fill="#3f3f3f"/></svg>
<span class="t" style="font-family:'Liberation Sans', sans-serif;font-size:9.0px;color:#ffffff;top:335px;-webkit-text-stroke:0.2px #ffffff;right:1008.70px;transform:scaleX(1.0384);transform-origin:right;">44</span>
<svg style="left:0;top:0" width="1024" height="640" viewBox="0 0 1024 640"><rect x="0" y="344.9" width="19" height="1" fill="#3f3f3f"/></svg>
<span class="t" style="font-family:'Liberation Sans', sans-serif;font-size:9.0px;color:#ffffff;top:349px;-webkit-text-stroke:0.2px #ffffff;right:1008.70px;transform:scaleX(1.0384);transform-origin:right;">45</span>
<svg style="left:0;top:0" width="1024" height="640" viewBox="0 0 1024 640"><rect x="0" y="359.5" width="19" height="1" fill="#3f3f3f"/></svg>
<span class="t" style="font-family:'Liberation Sans', sans-serif;font-size:9.0px;color:#ffffff;top:363px;-webkit-text-stroke:0.2px #ffffff;right:1008.70px;transform:scaleX(1.0384);transform-origin:right;">46</span>
<svg style="left:0;top:0" width="1024" height="640" viewBox="0 0 1024 640"><rect x="0" y="373.25" width="19" height="1" fill="#3f3f3f"/></svg>
<span class="t" style="font-family:'Liberation Sans', sans-serif;font-size:9.0px;color:#ffffff;top:377px;-webkit-text-stroke:0.2px #ffffff;right:1008.70px;transform:scaleX(1.0384);transform-origin:right;">47</span>
<svg style="left:0;top:0" width="1024" height="640" viewBox="0 0 1024 640"><rect x="0" y="387.0" width="19" height="1" fill="#3f3f3f"/></svg>
<span class="t" style="font-family:'Liberation Sans', sans-serif;font-size:9.0px;color:#ffffff;top:390px;-webkit-text-stroke:0.2px #ffffff;right:1008.70px;transform:scaleX(1.0384);transform-origin:right;">48</span>
<svg style="left:0;top:0" width="1024" height="640" viewBox="0 0 1024 640"><rect x="0" y="400.4" width="19" height="1" fill="#3f3f3f"/></svg>
<span class="t" style="font-family:'Liberation Sans', sans-serif;font-size:9.0px;color:#ffffff;top:405px;-webkit-text-stroke:0.2px #ffffff;right:1008.70px;transform:scaleX(1.0384);transform-origin:right;">49</span>
<svg style="left:0;top:0" width="1024" height="640" viewBox="0 0 1024 640"><rect x="0" y="414.75" width="19" height="1" fill="#3f3f3f"/></svg>
<span class="t" style="font-family:'Liberation Sans', sans-serif;font-size:9.0px;color:#ffffff;top:419px;-webkit-text-stroke:0.2px #ffffff;right:1008.70px;transform:scaleX(1.0384);transform-origin:right;">50</span>
<svg style="left:0;top:0" width="1024" height="640" viewBox="0 0 1024 640"><rect x="0" y="428.9" width="19" height="1" fill="#3f3f3f"/></svg>
<span class="t" style="font-family:'Liberation Sans', sans-serif;font-size:9.0px;color:#ffffff;top:432px;-webkit-text-stroke:0.2px #ffffff;right:1008.70px;transform:scaleX(1.0384);transform-origin:right;">51</span>
<svg style="left:0;top:0" width="1024" height="640" viewBox="0 0 1024 640"><rect x="0" y="442.4" width="19" height="1" fill="#3f3f3f"/></svg>
<span class="t" style="font-family:'Liberation Sans', sans-serif;font-size:9.0px;color:#ffffff;top:446px;-webkit-text-stroke:0.2px #ffffff;right:1008.70px;transform:scaleX(1.0384);transform-origin:right;">52</span>
<svg style="left:0;top:0" width="1024" height="640" viewBox="0 0 1024 640"><rect x="0" y="456.0" width="19" height="1" fill="#3f3f3f"/></svg>
<span class="t" style="font-family:'Liberation Sans', sans-serif;font-size:9.0px;color:#ffffff;top:460px;-webkit-text-stroke:0.2px #ffffff;right:1008.70px;transform:scaleX(1.0384);transform-origin:right;">53</span>
<svg style="left:0;top:0" width="1024" height="640" viewBox="0 0 1024 640"><rect x="0" y="469.75" width="19" height="1" fill="#3f3f3f"/></svg>
<span class="t" style="font-family:'Liberation Sans', sans-serif;font-size:9.0px;color:#ffffff;top:473px;-webkit-text-stroke:0.2px #ffffff;right:1008.70px;transform:scaleX(1.0384);transform-origin:right;">54</span>
<svg style="left:0;top:0" width="1024" height="640" viewBox="0 0 1024 640"><rect x="0" y="483.5" width="19" height="1" fill="#3f3f3f"/></svg>
<span class="t" style="font-family:'Liberation Sans', sans-serif;font-size:9.0px;color:#ffffff;top:488px;-webkit-text-stroke:0.2px #ffffff;right:1008.70px;transform:scaleX(1.0384);transform-origin:right;">55</span>
<svg style="left:0;top:0" width="1024" height="640" viewBox="0 0 1024 640"><rect x="0" y="497.6" width="19" height="1" fill="#3f3f3f"/></svg>
<span class="t" style="font-family:'Liberation Sans', sans-serif;font-size:9.0px;color:#ffffff;top:501px;-webkit-text-stroke:0.2px #ffffff;right:1008.70px;transform:scaleX(1.0384);transform-origin:right;">56</span>
<svg style="left:0;top:0" width="1024" height="640" viewBox="0 0 1024 640"><rect x="0" y="511.4" width="19" height="1" fill="#3f3f3f"/></svg>
<span class="t" style="font-family:'Liberation Sans', sans-serif;font-size:9.0px;color:#ffffff;top:515px;-webkit-text-stroke:0.2px #ffffff;right:1008.70px;transform:scaleX(1.0384);transform-origin:right;">57</span>
<svg style="left:0;top:0" width="1024" height="640" viewBox="0 0 1024 640"><rect x="0" y="524.9" width="19" height="1" fill="#3f3f3f"/></svg>
<span class="t" style="font-family:'Liberation Sans', sans-serif;font-size:9.0px;color:#ffffff;top:529px;-webkit-text-stroke:0.2px #ffffff;right:1008.70px;transform:scaleX(1.0384);transform-origin:right;">58</span>
<svg style="left:0;top:0" width="1024" height="640" viewBox="0 0 1024 640"><rect x="0" y="538.9" width="19" height="1" fill="#3f3f3f"/></svg>
<span class="t" style="font-family:'Liberation Sans', sans-serif;font-size:9.0px;color:#ffffff;top:542px;-webkit-text-stroke:0.2px #ffffff;right:1008.70px;transform:scaleX(1.0384);transform-origin:right;">59</span>
<svg style="left:0;top:0" width="1024" height="640" viewBox="0 0 1024 640"><rect x="0" y="552.25" width="19" height="1" fill="#3f3f3f"/></svg>
<span class="t" style="font-family:'Liberation Sans', sans-serif;font-size:9.0px;color:#ffffff;top:556px;-webkit-text-stroke:0.2px #ffffff;right:1008.70px;transform:scaleX(1.0384);transform-origin:right;">60</span>
<svg style="left:0;top:0" width="1024" height="640" viewBox="0 0 1024 640"><rect x="0" y="566.0" width="19" height="1" fill="#3f3f3f"/></svg>
<span class="t" style="font-family:'Liberation Sans', sans-serif;font-size:9.0px;color:#ffffff;top:569px;-webkit-text-stroke:0.2px #ffffff;right:1008.70px;transform:scaleX(1.0384);transform-origin:right;">61</span>
<svg style="left:0;top:0" width="1024" height="640" viewBox="0 0 1024 640"><rect x="0" y="579.0" width="19" height="1" fill="#3f3f3f"/></svg>
<span class="t" style="font-family:'Liberation Sans', sans-serif;font-size:9.0px;color:#ffffff;top:583px;-webkit-text-stroke:0.2px #ffffff;right:1008.70px;transform:scaleX(1.0384);transform-origin:right;">62</span>
<svg style="left:0;top:0" width="1024" height="640" viewBox="0 0 1024 640"><rect x="0" y="593.1" width="19" height="1" fill="#3f3f3f"/></svg>
<span class="t" style="font-family:'Liberation Sans', sans-serif;font-size:9.0px;color:#ffffff;top:596px;-webkit-text-stroke:0.2px #ffffff;right:1008.70px;transform:scaleX(1.0384);transform-origin:right;">63</span>
<span class="t" style="font-family:'Liberation Sans', sans-serif;font-size:9.0px;color:#000;top:145px;-webkit-text-stroke:0.2px #000;right:959.10px;transform:scaleX(1.0368);transform-origin:right;">4</span>
<span class="t" style="font-family:'Liberation Sans', sans-serif;font-size:9.0px;color:#000;top:158px;-webkit-text-stroke:0.2px #000;right:959.10px;transform:scaleX(1.0368);transform-origin:right;">5</span>
<span class="t" style="font-family:'Liberation Sans', sans-serif;font-size:9.0px;color:#000;top:172px;-webkit-text-stroke:0.2px #000;right:959.10px;transform:scaleX(1.0368);transform-origin:right;">6</span>
<span class="t" style="font-family:'Liberation Sans', sans-serif;font-size:9.0px;color:#000;top:185px;-webkit-text-stroke:0.2px #000;right:959.10px;transform:scaleX(1.0368);transform-origin:right;">7</span>
<span class="t" style="font-family:'Liberation Sans', sans-serif;font-size:9.0px;color:#000;top:199px;-webkit-text-stroke:0.2px #000;right:959.10px;transform:scaleX(1.0368);transform-origin:right;">8</span>
<span class="t" style="font-family:'Liberation Sans', sans-serif;font-size:9.0px;color:#000;top:212px;-webkit-text-stroke:0.2px #000;right:959.10px;transform:scaleX(1.0368);transform-origin:right;">9</span>
<span class="t" style="font-family:'Liberation Sans', sans-serif;font-size:9.0px;color:#000;top:226px;-webkit-text-stroke:0.2px #000;right:959.10px;transform:scaleX(1.0184);transform-origin:right;">10</span>
<span class="t" style="font-family:'Liberation Sans', sans-serif;font-size:9.0px;color:#000;top:145px;-webkit-text-stroke:0.2px #000;right:818.40px;transform:scaleX(0.9826);transform-origin:right;">12.49%</span>
<span class="t" style="font-family:'Liberation Sans', sans-serif;font-size:9.0px;color:#000;top:158px;-webkit-text-stroke:0.2px #000;right:818.40px;transform:scaleX(0.9792);transform-origin:right;">8.93%</span>
<span class="t" style="font-family:'Liberation Sans', sans-serif;font-size:9.0px;color:#000;top:172px;-webkit-text-stroke:0.2px #000;right:818.40px;transform:scaleX(0.9792);transform-origin:right;">8.92%</span>
<span class="t" style="font-family:'Liberation Sans', sans-serif;font-size:9.0px;color:#000;top:185px;-webkit-text-stroke:0.2px #000;right:818.40px;transform:scaleX(0.9792);transform-origin:right;">8.93%</span>
<span class="t" style="font-family:'Liberation Sans', sans-serif;font-size:9.0px;color:#000;top:199px;-webkit-text-stroke:0.2px #000;right:818.40px;transform:scaleX(0.9792);transform-origin:right;">4.46%</span>
<span class="t" style="font-family:'Liberation Sans', sans-serif;font-size:9.0px;color:#000;top:253px;-webkit-text-stroke:0.2px #000;right:818.40px;transform:scaleX(0.9710);transform-origin:right;">100.00%</span>
<span class="t" style="font-family:'Liberation Sans', sans-serif;font-size:9.0px;color:#000;top:280px;-webkit-text-stroke:0.2px #000;left:22.00px;transform:scaleX(0.9645);transform-origin:left;">Operating Expenses are Expected to be 60% of Sales</span>
<span class="t" style="font-family:'Liberation Sans', sans-serif;font-size:9.0px;color:#000;top:307px;-webkit-text-stroke:0.2px #000;left:22.00px;transform:scaleX(0.9648);transform-origin:left;">Company&#x27;s Tax Rate is Expected to be 30%</span>
<span class="t" style="font-family:'Liberation Sans', sans-serif;font-size:9.0px;color:#000;top:335px;-webkit-text-stroke:0.2px #000;left:22.00px;transform:scaleX(0.9834);transform-origin:left;">Expected Yield to Maturity on company&#x27;s 10 year bonds if issued today is :</span>
<span class="t" style="font-family:'Liberation Sans', sans-serif;font-size:9.0px;color:#000;top:335px;-webkit-text-stroke:0.2px #000;right:530.30px;transform:scaleX(0.9792);transform-origin:right;">2.00%</span>
<span class="t" style="font-family:'Liberation Sans', sans-serif;font-size:9.0px;color:#000;top:363px;-webkit-text-stroke:0.2px #000;left:22.00px;transform:scaleX(0.9344);transform-origin:left;">Risk Free Rate is</span>
<span class="t" style="font-family:'Liberation Sans', sans-serif;font-size:9.0px;color:#000;top:363px;-webkit-text-stroke:0.2px #000;right:530.30px;transform:scaleX(0.9792);transform-origin:right;">0.12%</span>
<span class="t" style="font-family:'Liberation Sans', sans-serif;font-size:9.0px;color:#000;top:377px;-webkit-text-stroke:0.2px #000;left:22.00px;transform:scaleX(0.9563);transform-origin:left;">Company&#x27;s Beta is</span>
<span class="t" style="font-family:'Liberation Sans', sans-serif;font-size:9.0px;color:#000;top:377px;-webkit-text-stroke:0.2px #000;right:530.30px;transform:scaleX(0.9988);transform-origin:right;">1.4</span>
<span class="t" style="font-family:'Liberation Sans', sans-serif;font-size:9.0px;color:#000;top:390px;-webkit-text-stroke:0.2px #000;left:22.00px;transform:scaleX(0.9997);transform-origin:left;">Market/Equity Risk Premium</span>
<span class="t" style="font-family:'Liberation Sans', sans-serif;font-size:9.0px;color:#000;top:390px;-webkit-text-stroke:0.2px #000;right:530.30px;transform:scaleX(0.9792);transform-origin:right;">6.00%</span>
<span class="t" style="font-family:'Liberation Sans', sans-serif;font-size:9.0px;color:#000;top:419px;-webkit-text-stroke:0.2px #000;left:22.00px;transform:scaleX(1.0127);transform-origin:left;">Target Capital Structure used to raise initial capital outlay</span>
<span class="t" style="font-family:'Liberation Sans', sans-serif;font-size:9.0px;color:#000;top:446px;-webkit-text-stroke:0.2px #000;right:959.40px;transform:scaleX(0.9159);transform-origin:right;">40%</span>
<span class="t" style="font-family:'Liberation Sans', sans-serif;font-size:9.0px;color:#000;top:446px;-webkit-text-stroke:0.2px #000;left:69.00px;transform:scaleX(0.9992);transform-origin:left;">Debt</span>
<span class="t" style="font-family:'Liberation Sans', sans-serif;font-size:9.0px;color:#000;top:460px;-webkit-text-stroke:0.2px #000;right:959.40px;transform:scaleX(0.9159);transform-origin:right;">60%</span>
<span class="t" style="font-family:'Liberation Sans', sans-serif;font-size:9.0px;color:#000;top:460px;-webkit-text-stroke:0.2px #000;left:69.00px;transform:scaleX(0.9507);transform-origin:left;">Common Stock</span>
<span class="t" style="font-family:'Liberation Sans', sans-serif;font-size:9.0px;color:#000;top:488px;-webkit-text-stroke:0.2px #000;left:22.00px;transform:scaleX(0.9694);transform-origin:left;">Cost of Debt</span>
<span class="t" style="font-family:'Liberation Sans', sans-serif;font-size:9.0px;color:#000;top:488px;-webkit-text-stroke:0.2px #000;right:818.40px;transform:scaleX(0.9792);transform-origin:right;">1.40%</span>
<span class="t" style="font-family:'Liberation Sans', sans-serif;font-size:9.0px;color:#000;top:501px;-webkit-text-stroke:0.2px #000;left:22.00px;transform:scaleX(0.9456);transform-origin:left;">Cost of Common Stock</span>
<span class="t" style="font-family:'Liberation Sans', sans-serif;font-size:9.0px;color:#000;top:501px;-webkit-text-stroke:0.2px #000;right:818.40px;transform:scaleX(0.9792);transform-origin:right;">8.52%</span>
<span class="t" style="font-family:'Liberation Sans', sans-serif;font-size:9.0px;color:#000;top:515px;-webkit-text-stroke:0.2px #000;left:22.00px;transform:scaleX(0.8833);transform-origin:left;">WACC</span>
<span class="t" style="font-family:'Liberation Sans', sans-serif;font-size:9.0px;color:#000;top:515px;-webkit-text-stroke:0.2px #000;right:818.40px;transform:scaleX(0.9792);transform-origin:right;">5.67%</span>
<span class="t" style="font-family:'Liberation Sans', sans-serif;font-size:9.0px;color:#000;top:556px;-webkit-text-stroke:0.2px #000;left:22.00px;transform:scaleX(1.0082);transform-origin:left;">At the end of year 10, the company believes they will be able to sell the equipment for $500,000.  At that time the equipment will have been fully depreciated</span>
<span class="t" style="font-family:'Liberation Sans', sans-serif;font-size:8.6px;color:#d6d6d6;top:10px;-webkit-text-stroke:0.15px #d6d6d6;left:15.00px;transform:scaleX(0.9549);transform-origin:left;">AutoSave</span>
<svg style="left:0;top:0" width="1024" height="640" viewBox="0 0 1024 640"><rect x="55" y="9" width="28" height="10" rx="5" fill="#1c1c1c"/><rect x="55.6" y="9.5" width="8.9" height="8.9" rx="5" fill="#efefef"/></svg>
<span class="t" style="font-family:'Liberation Sans', sans-serif;font-size:5.6px;color:#c4c4c4;top:12px;font-weight:700;left:66.80px;transform:scaleX(0.9385);transform-origin:left;">OFF</span>
<svg style="left:91px;top:8px;" width="13" height="12" viewBox="0 0 13 12"><path d="M1 6.2 L6.5 1 L12 6.2 M2.6 5 L2.6 10.8 L5.2 10.8 L5.2 7.6 L7.8 7.6 L7.8 10.8 L10.4 10.8 L10.4 5" fill="none" stroke="#dcdcdc" stroke-width="1" stroke-linecap="round" stroke-linejoin="round" /></svg>
<svg style="left:111.6px;top:8.4px;" width="11" height="11" viewBox="0 0 11 11"><path d="M0.8 0.8 H7.9 L9.9 2.8 V10 H0.8 Z M2.8 0.8 V3.7 H7 V0.8 M2.6 10 V6.4 H8.1 V10" fill="none" stroke="#dcdcdc" stroke-width="1" stroke-linecap="butt" stroke-linejoin="miter" /></svg>
<svg style="left:130.8px;top:8.4px;" width="12" height="12" viewBox="0 0 12 12"><path d="M0.8 0.8 H7.9 L9.9 2.8 V4.4 M4.8 10 H0.8 V0.8 M2.8 0.8 V3.7 H7 V0.8 M2.6 10 V6.4 H5.8" fill="none" stroke="#dcdcdc" stroke-width="1" stroke-linecap="butt" stroke-linejoin="miter" /><path d="M5.6 11.4 L6.3 8.7 L9.7 5.3 L11.7 7.3 L8.3 10.7 Z" fill="#e8e8e8"/></svg>
<svg style="left:149.5px;top:8px;" width="12" height="12" viewBox="0 0 12 12"><path d="M1.2 1.6 L1.5 5.2 L5.2 4.6 M1.7 5 C3.2 2.2 6.4 1.4 8.4 2.8 C10.6 4.4 10.4 7.4 8 9.4 L4.6 11.6" fill="none" stroke="#dcdcdc" stroke-width="1" stroke-linecap="round" stroke-linejoin="round" /></svg>
<svg style="left:164.6px;top:10.6px" width="8" height="8" viewBox="-4 -4 8 8"><path d="M-2.448 -1.224 L0 1.224 L2.448 -1.224" fill="none" stroke="#dcdcdc" stroke-width="0.9974999999999999" stroke-linecap="round" stroke-linejoin="round"/></svg>
<svg style="left:177px;top:8px;" width="13" height="13" viewBox="0 0 13 13"><path d="M10.4 3.1 A5.3 5.3 0 1 0 11.5 7.9 M7.6 1.5 H11.9 V5.6" fill="none" stroke="#dcdcdc" stroke-width="1" stroke-linecap="round" stroke-linejoin="round" /></svg>
<svg style="left:0;top:0" width="1024" height="640" viewBox="0 0 1024 640"><rect x="198.45" y="13.45" width="1.7" height="1.7" rx="1" fill="#dedede"/><rect x="201.95" y="13.45" width="1.7" height="1.7" rx="1" fill="#dedede"/><rect x="205.45" y="13.45" width="1.7" height="1.7" rx="1" fill="#dedede"/></svg>
<svg style="left:414.5px;top:8px;" width="10" height="12" viewBox="0 0 10 12"><path d="M2.5 0.5 L7 0.5 L9.5 3 L9.5 11.5 L2.5 11.5 Z" fill="#e8efe9" stroke="#cfd8d0" stroke-width="0.5"/><rect x="0" y="3.4" width="5.2" height="5.2" rx="0.8" fill="#3f8f5f"/><path d="M1.6 4.6 L4 7.6 M4 4.6 L1.6 7.6" stroke="#fff" stroke-width="0.8"/><path d="M6.2 4.5 H8.6 M6.2 6.2 H8.6 M6.2 7.9 H8.6" stroke="#49a86e" stroke-width="0.7"/></svg>
<span class="t" style="font-family:'Liberation Sans', sans-serif;font-size:9.4px;color:#f4f4f4;top:10px;font-weight:700;left:428.00px;transform:scaleX(1.0278);transform-origin:left;">Project Spring 2021.xlsx  -  Read-Only</span>
<svg style="left:603px;top:10.8px" width="8" height="8" viewBox="-4 -4 8 8"><path d="M-2.3459999999999996 -1.1729999999999998 L0 1.1729999999999998 L2.3459999999999996 -1.1729999999999998" fill="none" stroke="#6e6e6e" stroke-width="0.9974999999999999" stroke-linecap="round" stroke-linejoin="round"/></svg>
<svg style="left:980px;top:8.6px;" width="12" height="12" viewBox="0 0 12 12"><path d="M4.9 1.4 A3.7 3.7 0 1 1 4.89 1.4 Z M7.6 7.8 L10.6 10.4" fill="none" stroke="#dcdcdc" stroke-width="1.0" stroke-linecap="round" stroke-linejoin="round" /></svg>
<svg style="left:1003px;top:7px;" width="15" height="14" viewBox="0 0 15 14"><circle cx="10.2" cy="3.9" r="2.7" fill="none" stroke="#dcdcdc" stroke-width="0.9"/><circle cx="4.8" cy="6.7" r="2.2" fill="#353535" stroke="#dcdcdc" stroke-width="0.9"/><path d="M1.4 10 C1.1 13.6 8.4 13.6 8.1 10" fill="none" stroke="#dcdcdc" stroke-width="0.9" stroke-linecap="round" stroke-linejoin="round" /></svg>
<span class="t" style="font-family:'Liberation Sans', sans-serif;font-size:9.6px;color:#ffffff;top:33px;font-weight:700;left:8.00px;transform:scaleX(0.9904);transform-origin:left;">Home</span>
<svg style="left:0;top:0" width="1024" height="640" viewBox="0 0 1024 640"><rect x="8" y="44.6" width="27" height="2.2" rx="1" fill="#f0f0f0"/></svg>
<span class="t" style="font-family:'Liberation Sans', sans-serif;font-size:9.6px;color:#e4e4e4;top:33px;-webkit-text-stroke:0.2px #e4e4e4;left:51.50px;transform:scaleX(1.0625);transform-origin:left;">Insert</span>
<span class="t" style="font-family:'Liberation Sans', sans-serif;font-size:9.6px;color:#e4e4e4;top:33px;-webkit-text-stroke:0.2px #e4e4e4;left:94.50px;transform:scaleX(1.0138);transform-origin:left;">Draw</span>
<span class="t" style="font-family:'Liberation Sans', sans-serif;font-size:9.6px;color:#e4e4e4;top:33px;-webkit-text-stroke:0.2px #e4e4e4;left:134.50px;transform:scaleX(0.9928);transform-origin:left;">Page Layout</span>
<span class="t" style="font-family:'Liberation Sans', sans-serif;font-size:9.6px;color:#e4e4e4;top:33px;-webkit-text-stroke:0.2px #e4e4e4;left:207.50px;transform:scaleX(1.0004);transform-origin:left;">Formulas</span>
<span class="t" style="font-family:'Liberation Sans', sans-serif;font-size:9.6px;color:#e4e4e4;top:33px;-webkit-text-stroke:0.2px #e4e4e4;left:266.50px;transform:scaleX(0.9869);transform-origin:left;">Data</span>
<span class="t" style="font-family:'Liberation Sans', sans-serif;font-size:9.6px;color:#e4e4e4;top:33px;-webkit-text-stroke:0.2px #e4e4e4;left:303.50px;transform:scaleX(0.9692);transform-origin:left;">Review</span>
<span class="t" style="font-family:'Liberation Sans', sans-serif;font-size:9.6px;color:#e4e4e4;top:33px;-webkit-text-stroke:0.2px #e4e4e4;left:351.70px;transform:scaleX(1.0182);transform-origin:left;">View</span>
<span class="t" style="font-family:'Liberation Sans', sans-serif;font-size:9.6px;color:#e4e4e4;top:33px;-webkit-text-stroke:0.2px #e4e4e4;left:401.00px;transform:scaleX(0.9871);transform-origin:left;">Tell me</span>
<svg style="left:385.5px;top:31px;" width="9" height="13" viewBox="0 0 9 13"><path d="M4.5 1 C2.4 1 1 2.6 1 4.4 C1 5.8 1.8 6.6 2.6 7.6 L2.8 9.2 L6.2 9.2 L6.4 7.6 C7.2 6.6 8 5.8 8 4.4 C8 2.6 6.6 1 4.5 1 Z M3.2 11 L5.8 11" fill="none" stroke="#dcdcdc" stroke-width="0.9" stroke-linecap="round" stroke-linejoin="round" /></svg>
<svg style="left:0;top:0" width="1024" height="640" viewBox="0 0 1024 640"><rect x="894" y="30.3" width="47" height="16.8" rx="3" fill="#5b5b5b"/></svg>
<svg style="left:899.5px;top:33px;" width="11" height="11" viewBox="0 0 11 11"><path d="M1.6 6.2 L1.6 9.7 L7.4 9.7" fill="none" stroke="#dcdcdc" stroke-width="0.9" stroke-linecap="round" stroke-linejoin="round" /><path d="M3.4 7.4 C3.6 5 5 3.7 6.8 3.7 L6.8 1.7 L9.8 4.4 L6.8 7.1 L6.8 5.2 C5.4 5.2 4.4 5.8 3.4 7.4 Z" fill="#7e7e7e" stroke="#dcdcdc" stroke-width="0.8" stroke-linecap="round" stroke-linejoin="round" /></svg>
<span class="t" style="font-family:'Liberation Sans', sans-serif;font-size:8.8px;color:#ffffff;top:35px;font-weight:700;left:913.00px;transform:scaleX(0.9610);transform-origin:left;">Share</span>
<svg style="left:0;top:0" width="1024" height="640" viewBox="0 0 1024 640"><rect x="949" y="30.3" width="68" height="16.8" rx="3" fill="#5b5b5b"/></svg>
<svg style="left:954.5px;top:33px;" width="11" height="11" viewBox="0 0 11 11"><path d="M1 1.6 L8.8 1.6 L8.8 7.4 L4.6 7.4 L2.6 9.6 L2.6 7.4 L1 7.4 Z" fill="none" stroke="#dcdcdc" stroke-width="0.9" stroke-linecap="round" stroke-linejoin="round" /></svg>
<span class="t" style="font-family:'Liberation Sans', sans-serif;font-size:8.8px;color:#ffffff;top:35px;font-weight:700;left:967.50px;transform:scaleX(0.9787);transform-origin:left;">Comments</span>
<svg style="left:11px;top:54px;" width="22" height="23" viewBox="0 0 22 23"><path d="M4.6 4.7 H1.7 V20.4 H9.6 M12.1 4.7 H15.3 V8.8" fill="none" stroke="#8a6b45" stroke-width="1.3"/><path d="M4.6 6 V3.5 H6.6 V1.4 H10.1 V3.5 H12.1 V6 Z" fill="none" stroke="#858585" stroke-width="0.9"/><rect x="10.3" y="9.6" width="9.5" height="12" fill="#2c2c2c" stroke="#808080" stroke-width="1"/></svg>
<svg style="left:32.9px;top:60.599999999999994px" width="8" height="8" viewBox="-4 -4 8 8"><path d="M-1.938 -0.969 L0 0.969 L1.938 -0.969" fill="none" stroke="#707070" stroke-width="0.9450000000000001" stroke-linecap="round" stroke-linejoin="round"/></svg>
<span class="t" style="font-family:'Liberation Sans', sans-serif;font-size:7.7px;color:#8e8e8e;top:80px;-webkit-text-stroke:0.1px #8e8e8e;left:14.80px;transform:scaleX(0.9658);transform-origin:left;">Paste</span>
<svg style="left:46px;top:52.5px;" width="9" height="13" viewBox="0 0 9 13"><path d="M2.2 0.8 L5.9 8.6 M6.8 0.8 L3.1 8.6" fill="none" stroke="#e0e0e0" stroke-width="0.9" stroke-linecap="round" stroke-linejoin="round" /><circle cx="2.4" cy="10.4" r="1.5" fill="none" stroke="#3d8edb" stroke-width="1"/><circle cx="6.6" cy="10.4" r="1.5" fill="none" stroke="#3d8edb" stroke-width="1"/></svg>
<svg style="left:44.5px;top:68.5px;" width="12" height="12" viewBox="0 0 12 12"><path d="M3.2 9.6 H0.8 V0.8 H6" fill="none" stroke="#ececec" stroke-width="1" stroke-linecap="butt" stroke-linejoin="miter" /><path d="M4.4 3 H8.6 L11 5.4 V11.2 H4.4 Z" fill="none" stroke="#ececec" stroke-width="1" stroke-linecap="butt" stroke-linejoin="miter" /><path d="M6.4 8.6 H9.2" fill="none" stroke="#ececec" stroke-width="0.9" stroke-linecap="butt" stroke-linejoin="miter" /></svg>
<svg style="left:58.5px;top:70.9px" width="8" height="8" viewBox="-4 -4 8 8"><path d="M-1.938 -0.969 L0 0.969 L1.938 -0.969" fill="none" stroke="#f0f0f0" stroke-width="1.26" stroke-linecap="round" stroke-linejoin="round"/></svg>
<svg style="left:44.5px;top:84.5px;" width="12" height="11" viewBox="0 0 12 11"><path d="M1 6.6 L5.6 3.8 L8.2 7.6 L4.2 10.4 Z" fill="#e8a33a"/><path d="M2.4 7.4 L5.4 9.4" stroke="#f7d48a" stroke-width="0.8"/><path d="M5.6 3.6 L7 2.6 L9.2 5.8 L7.8 6.8 Z" fill="#d8d8d8"/><path d="M8 3.4 L10.6 0.8" stroke="#e4e4e4" stroke-width="1.4" stroke-linecap="round"/></svg>
<svg style="left:0;top:0" width="1024" height="640" viewBox="0 0 1024 640"><rect x="74.2" y="51" width="1" height="43.5" fill="#474747"/><rect x="82" y="55.2" width="99.7" height="16.4" rx="2.5" fill="#3a3a3a"/></svg>
<span class="t" style="font-family:'Liberation Sans', sans-serif;font-size:8.2px;color:#eaeaea;top:60px;-webkit-text-stroke:0.05px #eaeaea;left:86.30px;transform:scaleX(1.0888);transform-origin:left;">Calibri (Body)</span>
<svg style="left:172.8px;top:59.6px" width="8" height="8" viewBox="-4 -4 8 8"><path d="M-2.1420000000000003 -1.0710000000000002 L0 1.0710000000000002 L2.1420000000000003 -1.0710000000000002" fill="none" stroke="#e6e6e6" stroke-width="1.1550000000000002" stroke-linecap="round" stroke-linejoin="round"/></svg>
<svg style="left:0;top:0" width="1024" height="640" viewBox="0 0 1024 640"><rect x="183.4" y="55.2" width="38.3" height="16.4" rx="2.5" fill="#3a3a3a"/></svg>
<span class="t" style="font-family:'Liberation Sans', sans-serif;font-size:8.2px;color:#eaeaea;top:60px;-webkit-text-stroke:0.05px #eaeaea;left:188.00px;transform:scaleX(0.9176);transform-origin:left;">11</span>
<svg style="left:212.4px;top:59.6px" width="8" height="8" viewBox="-4 -4 8 8"><path d="M-2.1420000000000003 -1.0710000000000002 L0 1.0710000000000002 L2.1420000000000003 -1.0710000000000002" fill="none" stroke="#e6e6e6" stroke-width="1.1550000000000002" stroke-linecap="round" stroke-linejoin="round"/></svg>
<span class="t" style="font-family:'Liberation Sans', sans-serif;font-size:11.6px;color:#dedede;top:57px;left:226.40px;transform:scaleX(1.1636);transform-origin:left;">A</span>
<svg style="left:233.6px;top:57.6px;" width="5" height="4" viewBox="0 0 5 4"><path d="M0.6 3 L2.2 0.9 L3.8 3" fill="none" stroke="#3d8edb" stroke-width="0.9" stroke-linecap="round" stroke-linejoin="round" /></svg>
<span class="t" style="font-family:'Liberation Sans', sans-serif;font-size:9.0px;color:#dedede;top:60px;left:245.80px;transform:scaleX(1.2301);transform-origin:left;">A</span>
<svg style="left:253px;top:57.6px;" width="5" height="4" viewBox="0 0 5 4"><path d="M0.6 1 L2.2 3.1 L3.8 1" fill="none" stroke="#3d8edb" stroke-width="0.9" stroke-linecap="round" stroke-linejoin="round" /></svg>
<span class="t" style="font-family:'Liberation Sans', sans-serif;font-size:9.4px;color:#f0f0f0;top:81px;font-weight:700;left:87.40px;transform:scaleX(0.8700);transform-origin:left;">B</span>
<span class="t" style="font-family:'Liberation Serif', serif;font-size:9.6px;color:#e4e4e4;top:81px;font-style:italic;left:106.60px;transform:scaleX(1.2488);transform-origin:left;">I</span>
<span class="t" style="font-family:'Liberation Sans', sans-serif;font-size:8.6px;color:#b8b8b8;top:81px;left:124.40px;transform:scaleX(0.9648);transform-origin:left;">U</span>
<svg style="left:0;top:0" width="1024" height="640" viewBox="0 0 1024 640"><rect x="124.2" y="89.8" width="6.4" height="0.8" fill="#b8b8b8"/></svg>
<svg style="left:136.1px;top:82.1px" width="8" height="8" viewBox="-4 -4 8 8"><path d="M-1.938 -0.969 L0 0.969 L1.938 -0.969" fill="none" stroke="#e6e6e6" stroke-width="1.1550000000000002" stroke-linecap="round" stroke-linejoin="round"/></svg>
<svg style="left:0;top:0" width="1024" height="640" viewBox="0 0 1024 640"><rect x="150.0" y="80" width="1" height="11.8" fill="#474747"/></svg>
<svg style="left:159px;top:79.5px;" width="11.5" height="12" viewBox="0 0 11.5 12"><path d="M0.2 0.9 H11 M0.2 5.8 H11" fill="none" stroke="#d0d0d0" stroke-width="0.9" stroke-dasharray="1.6 1.4"/><path d="M0.7 0.4 V9.4 M5.6 0.4 V9.4 M10.5 0.4 V9.4" fill="none" stroke="#d0d0d0" stroke-width="0.9" stroke-dasharray="1.6 1.4"/><path d="M0.2 10.7 H11" stroke="#f2f2f2" stroke-width="1.2"/></svg>
<svg style="left:173.8px;top:82.1px" width="8" height="8" viewBox="-4 -4 8 8"><path d="M-1.938 -0.969 L0 0.969 L1.938 -0.969" fill="none" stroke="#e6e6e6" stroke-width="1.1550000000000002" stroke-linecap="round" stroke-linejoin="round"/></svg>
<svg style="left:0;top:0" width="1024" height="640" viewBox="0 0 1024 640"><rect x="188.1" y="80" width="1" height="11.8" fill="#474747"/></svg>
<svg style="left:197px;top:79.5px;" width="12" height="13" viewBox="0 0 12 13"><path d="M6.2 0.6 L1.9 5.2 L5 8.2 L8.3 4.8 Z M6.2 0.6 L6.6 3.4" fill="none" stroke="#dcdcdc" stroke-width="0.9" stroke-linecap="round" stroke-linejoin="round" /><path d="M9.4 3.4 C10.5 4.8 10.6 6.4 9.7 7.2 C8.7 6.4 8.6 4.8 9.4 3.4Z" fill="#6fb1ea"/><rect x="-0.3" y="9.5" width="11.3" height="2.9" fill="#fcf650"/></svg>
<svg style="left:211.3px;top:82.1px" width="8" height="8" viewBox="-4 -4 8 8"><path d="M-1.938 -0.969 L0 0.969 L1.938 -0.969" fill="none" stroke="#e6e6e6" stroke-width="1.1550000000000002" stroke-linecap="round" stroke-linejoin="round"/></svg>
<span class="t" style="font-family:'Liberation Sans', sans-serif;font-size:10.4px;color:#dedede;top:80px;left:225.80px;transform:scaleX(1.0811);transform-origin:left;">A</span>
<svg style="left:0;top:0" width="1024" height="640" viewBox="0 0 1024 640"><rect x="223.9" y="89" width="11.2" height="2.9" fill="#ee3a27"/></svg>
<svg style="left:238.4px;top:82.1px" width="8" height="8" viewBox="-4 -4 8 8"><path d="M-1.938 -0.969 L0 0.969 L1.938 -0.969" fill="none" stroke="#e6e6e6" stroke-width="1.1550000000000002" stroke-linecap="round" stroke-linejoin="round"/></svg>
<svg style="left:0;top:0" width="1024" height="640" viewBox="0 0 1024 640"><rect x="266.1" y="51" width="1" height="43.5" fill="#474747"/><rect x="277" y="56.85" width="10" height="1.1" fill="#8c8c8c"/><rect x="279" y="59.95" width="6.6" height="1.1" fill="#eeeeee"/><rect x="277" y="63.05" width="10" height="1.1" fill="#eeeeee"/><rect x="296" y="59.75" width="10" height="1.1" fill="#8c8c8c"/><rect x="297" y="62.35" width="7" height="1.1" fill="#8c8c8c"/><rect x="296" y="64.95" width="10" height="1.1" fill="#eeeeee"/><rect x="311" y="55.2" width="17" height="16.4" rx="2.5" fill="#4b4b4b"/><rect x="314.1" y="61.85" width="10" height="1.1" fill="#8c8c8c"/><rect x="317.5" y="64.95" width="6.6" height="1.1" fill="#eeeeee"/><rect x="314.1" y="67.95" width="10" height="1.1" fill="#eeeeee"/><rect x="333.0" y="57" width="1" height="13" fill="#474747"/></svg>
<svg style="left:342.5px;top:57px;" width="12.5" height="12" viewBox="0 0 12.5 12"><text x="0" y="0" transform="translate(3.0,8.2) rotate(-50) scale(0.9 1)" font-family="Liberation Sans, sans-serif" font-size="7.6" fill="#e0e0e0">ab</text><path d="M4 11 L11.2 4 M8 3.6 L11.4 3.6 L11.4 7" fill="none" stroke="#3d8edb" stroke-width="1" stroke-linecap="round" stroke-linejoin="round" /></svg>
<svg style="left:357px;top:59.6px" width="8" height="8" viewBox="-4 -4 8 8"><path d="M-1.938 -0.969 L0 0.969 L1.938 -0.969" fill="none" stroke="#e6e6e6" stroke-width="1.1550000000000002" stroke-linecap="round" stroke-linejoin="round"/></svg>
<svg style="left:0;top:0" width="1024" height="640" viewBox="0 0 1024 640"><rect x="277" y="80.95" width="10" height="1.1" fill="#eeeeee"/><rect x="277" y="83.85" width="7" height="1.1" fill="#eeeeee"/><rect x="277" y="86.75" width="10" height="1.1" fill="#8c8c8c"/><rect x="277" y="89.15" width="7" height="1.1" fill="#8c8c8c"/><rect x="296" y="80.95" width="10" height="1.1" fill="#eeeeee"/><rect x="297.4" y="83.85" width="7.2" height="1.1" fill="#eeeeee"/><rect x="296" y="86.75" width="10" height="1.1" fill="#8c8c8c"/><rect x="297.4" y="89.15" width="7.2" height="1.1" fill="#8c8c8c"/><rect x="314.1" y="80.95" width="10" height="1.1" fill="#eeeeee"/><rect x="317.1" y="83.85" width="7" height="1.1" fill="#eeeeee"/><rect x="314.1" y="86.75" width="10" height="1.1" fill="#8c8c8c"/><rect x="317.1" y="89.15" width="7" height="1.1" fill="#8c8c8c"/><rect x="333.0" y="80" width="1" height="11.8" fill="#474747"/><rect x="343.1" y="80.95" width="10.2" height="1.1" fill="#eeeeee"/><rect x="343.1" y="89.15" width="10.2" height="1.1" fill="#8c8c8c"/><rect x="349.5" y="83.85" width="3.8" height="1.1" fill="#eeeeee"/><rect x="349.5" y="86.75" width="3.8" height="1.1" fill="#8c8c8c"/></svg>
<svg style="left:343px;top:83px;" width="6.5" height="6" viewBox="0 0 6.5 6"><path d="M5.6 2.9 H0.9 M2.8 0.9 L0.8 2.9 L2.8 4.9" fill="none" stroke="#3d8edb" stroke-width="1" stroke-linecap="round" stroke-linejoin="round" /></svg>
<svg style="left:0;top:0" width="1024" height="640" viewBox="0 0 1024 640"><rect x="362" y="80.95" width="10.2" height="1.1" fill="#eeeeee"/><rect x="362" y="89.15" width="10.2" height="1.1" fill="#8c8c8c"/><rect x="368.4" y="83.85" width="3.8" height="1.1" fill="#eeeeee"/><rect x="368.4" y="86.75" width="3.8" height="1.1" fill="#8c8c8c"/></svg>
<svg style="left:361.7px;top:83px;" width="6.5" height="6" viewBox="0 0 6.5 6"><path d="M0.6 2.9 H5.2 M3.2 0.9 L5.2 2.9 L3.2 4.9" fill="none" stroke="#3d8edb" stroke-width="1" stroke-linecap="round" stroke-linejoin="round" /></svg>
<svg style="left:0;top:0" width="1024" height="640" viewBox="0 0 1024 640"><rect x="381.0" y="51" width="1" height="43.5" fill="#474747"/></svg>
<svg style="left:391px;top:57.5px;" width="12" height="12" viewBox="0 0 12 12"><text x="0.6" y="4.8" font-family="Liberation Sans, sans-serif" font-size="6.4" fill="#cfcfcf">ab</text><text x="0.6" y="10.6" font-family="Liberation Sans, sans-serif" font-size="6.4" fill="#cfcfcf">c</text><path d="M7.6 4.4 C11.4 4.4 11.4 9.2 7.4 9.2 H5.2 M6.8 7.4 L5 9.2 L6.8 11" fill="none" stroke="#3d8edb" stroke-width="0.95" stroke-linecap="round" stroke-linejoin="round" /></svg>
<span class="t" style="font-family:'Liberation Sans', sans-serif;font-size:7.8px;color:#ececec;top:60px;-webkit-text-stroke:0.17px #ececec;left:406.30px;transform:scaleX(1.0284);transform-origin:left;">Wrap Text</span>
<svg style="left:444.1px;top:59.6px" width="8" height="8" viewBox="-4 -4 8 8"><path d="M-1.938 -0.969 L0 0.969 L1.938 -0.969" fill="none" stroke="#e6e6e6" stroke-width="1.1550000000000002" stroke-linecap="round" stroke-linejoin="round"/></svg>
<svg style="left:389.8px;top:80px;" width="11.4" height="11" viewBox="0 0 11.4 11"><rect x="0.5" y="0.5" width="10.4" height="10" fill="none" stroke="#dedede" stroke-width="1"/><path d="M5.7 0.5 V2.6 M5.7 8.4 V10.5" stroke="#dedede" stroke-width="0.9"/><rect x="0.9" y="3.1" width="9.6" height="4.8" fill="#2c2c2c" stroke="#3d8edb" stroke-width="0.9"/><path d="M2.6 5.5 H8.8 M3.8 4.4 L2.6 5.5 L3.8 6.6 M7.6 4.4 L8.8 5.5 L7.6 6.6" fill="none" stroke="#3d8edb" stroke-width="0.8" stroke-linecap="round" stroke-linejoin="round" /></svg>
<span class="t" style="font-family:'Liberation Sans', sans-serif;font-size:7.8px;color:#ececec;top:83px;-webkit-text-stroke:0.17px #ececec;left:406.30px;transform:scaleX(1.0137);transform-origin:left;">Merge &amp; Center</span>
<svg style="left:464.4px;top:82.4px" width="8" height="8" viewBox="-4 -4 8 8"><path d="M-1.938 -0.969 L0 0.969 L1.938 -0.969" fill="none" stroke="#e6e6e6" stroke-width="1.1550000000000002" stroke-linecap="round" stroke-linejoin="round"/></svg>
<svg style="left:0;top:0" width="1024" height="640" viewBox="0 0 1024 640"><rect x="480.0" y="51" width="1" height="43.5" fill="#474747"/><rect x="487.1" y="55.2" width="110.5" height="16.4" rx="2.5" fill="#3a3a3a"/></svg>
<span class="t" style="font-family:'Liberation Sans', sans-serif;font-size:8.2px;color:#eaeaea;top:60px;-webkit-text-stroke:0.05px #eaeaea;left:491.80px;transform:scaleX(1.0466);transform-origin:left;">General</span>
<svg style="left:588px;top:59.6px" width="8" height="8" viewBox="-4 -4 8 8"><path d="M-2.1420000000000003 -1.0710000000000002 L0 1.0710000000000002 L2.1420000000000003 -1.0710000000000002" fill="none" stroke="#e6e6e6" stroke-width="1.1550000000000002" stroke-linecap="round" stroke-linejoin="round"/></svg>
<span class="t" style="font-family:'Liberation Sans', sans-serif;font-size:14.6px;color:#dedede;top:79px;left:492.60px;transform:scaleX(0.6892);transform-origin:left;">$</span>
<svg style="left:504.4px;top:82.4px" width="8" height="8" viewBox="-4 -4 8 8"><path d="M-1.938 -0.969 L0 0.969 L1.938 -0.969" fill="none" stroke="#e6e6e6" stroke-width="1.1550000000000002" stroke-linecap="round" stroke-linejoin="round"/></svg>
<span class="t" style="font-family:'Liberation Sans', sans-serif;font-size:12.6px;color:#dedede;top:81px;left:517.80px;transform:scaleX(0.9640);transform-origin:left;">%</span>
<svg style="left:538.5px;top:82px;" width="6.5" height="8.5" viewBox="0 0 6.5 8.5"><path d="M3.1 0.4 C4.6 0.4 5.6 1.4 5.6 3 C5.6 5.4 3.8 7.2 1.4 7.8 L1.2 7 C2.4 6.4 3.2 5.6 3.2 4.8 C1.8 4.8 0.8 4 0.8 2.6 C0.8 1.3 1.8 0.4 3.1 0.4 Z" fill="#e2e2e2"/></svg>
<svg style="left:0;top:0" width="1024" height="640" viewBox="0 0 1024 640"><rect x="555.9" y="80" width="1" height="11.8" fill="#474747"/></svg>
<svg style="left:565px;top:80px;" width="12" height="12" viewBox="0 0 12 12"><path d="M5.4 3.6 H0.8 M2.6 1.8 L0.8 3.6 L2.6 5.4" fill="none" stroke="#3d8edb" stroke-width="0.95" stroke-linecap="round" stroke-linejoin="round" /><text transform="translate(7.9,5.3) scale(0.74,1)" font-family="Liberation Sans, sans-serif" font-size="7.2" fill="#dcdcdc">0</text><text transform="translate(1.6,11.2) scale(0.74,1)" font-family="Liberation Sans, sans-serif" font-size="7.2" fill="#dcdcdc">.00</text></svg>
<svg style="left:583px;top:80px;" width="12" height="12" viewBox="0 0 12 12"><path d="M0.4 9 H5.4 M3.6 7.2 L5.4 9 L3.6 10.8" fill="none" stroke="#3d8edb" stroke-width="0.95" stroke-linecap="round" stroke-linejoin="round" /><text transform="translate(4.8,5.3) scale(0.74,1)" font-family="Liberation Sans, sans-serif" font-size="7.2" fill="#dcdcdc">.00</text><text transform="translate(6.4,11.2) scale(0.74,1)" font-family="Liberation Sans, sans-serif" font-size="7.2" fill="#dcdcdc">.0</text></svg>
<svg style="left:0;top:0" width="1024" height="640" viewBox="0 0 1024 640"><rect x="605.0" y="51" width="1" height="43.5" fill="#474747"/></svg>
<svg style="left:620px;top:57px;" width="20" height="16" viewBox="0 0 20 16"><rect x="3.3" y="0.3" width="9.2" height="5" fill="#b0403a"/><rect x="3.3" y="5.3" width="6.2" height="5.2" fill="#2f78c4"/><rect x="3.3" y="10.5" width="10.3" height="5" fill="#b0403a"/><path d="M0.4 0.4 H19.6 V15.6 H0.4 Z M0.4 5.3 H3.3 M12.5 5.3 H19.6 M0.4 10.5 H3.3 M13.6 10.5 H19.6 M3.3 0.4 V15.6 M13.8 0.4 V15.6 M16.6 0.4 V15.6" fill="none" stroke="#9c9c9c" stroke-width="0.8"/></svg>
<svg style="left:643px;top:60.900000000000006px" width="8" height="8" viewBox="-4 -4 8 8"><path d="M-1.938 -0.969 L0 0.969 L1.938 -0.969" fill="none" stroke="#e6e6e6" stroke-width="1.1550000000000002" stroke-linecap="round" stroke-linejoin="round"/></svg>
<span class="t" style="font-family:'Liberation Sans', sans-serif;font-size:7.6px;color:#ececec;top:80px;-webkit-text-stroke:0.17px #ececec;left:614.30px;transform:scaleX(1.0526);transform-origin:left;">Conditional</span>
<span class="t" style="font-family:'Liberation Sans', sans-serif;font-size:7.6px;color:#ececec;top:89px;-webkit-text-stroke:0.17px #ececec;left:614.90px;transform:scaleX(1.0579);transform-origin:left;">Formatting</span>
<svg style="left:660.5px;top:57px;" width="23" height="19" viewBox="0 0 23 19"><rect x="7.6" y="5.4" width="12.6" height="10.2" fill="#2f78c4"/><path d="M0.4 0.4 H20.4 V15.6 H0.4 Z M0.4 5.4 H20.4 M0.4 10.5 H20.4 M7.4 0.4 V15.6 M13.8 0.4 V15.6" fill="none" stroke="#9c9c9c" stroke-width="0.8"/><path d="M21.2 5 L10.6 15.4" stroke="#2c2c2c" stroke-width="3.4" stroke-linecap="round"/><path d="M21.2 5 L10.8 15.2" stroke="#d6d6d6" stroke-width="1.5" stroke-linecap="round"/><path d="M11.4 13.6 C9 14 8.6 16.8 5.6 17.6 C8.6 18.8 12.4 18 12.8 15 Z" fill="#3d8edb"/></svg>
<svg style="left:684px;top:60.900000000000006px" width="8" height="8" viewBox="-4 -4 8 8"><path d="M-1.938 -0.969 L0 0.969 L1.938 -0.969" fill="none" stroke="#e6e6e6" stroke-width="1.1550000000000002" stroke-linecap="round" stroke-linejoin="round"/></svg>
<span class="t" style="font-family:'Liberation Sans', sans-serif;font-size:7.6px;color:#ececec;top:80px;-webkit-text-stroke:0.17px #ececec;left:661.80px;transform:scaleX(1.0473);transform-origin:left;">Format</span>
<span class="t" style="font-family:'Liberation Sans', sans-serif;font-size:7.6px;color:#ececec;top:89px;-webkit-text-stroke:0.17px #ececec;left:659.90px;transform:scaleX(1.0442);transform-origin:left;">as Table</span>
<svg style="left:695.6px;top:57px;" width="24" height="19" viewBox="0 0 24 19"><path d="M0.4 0.4 H20.2 V15.6 H0.4 Z M0.4 2.9 H20.2 M0.4 11.8 H20.2 M4.2 0.4 V15.6 M17.6 0.4 V15.6" fill="none" stroke="#9c9c9c" stroke-width="0.8"/><rect x="4.3" y="2.9" width="13.2" height="8.8" fill="#2f78c4"/><path d="M22.2 5 L11.6 15.4" stroke="#2c2c2c" stroke-width="3.4" stroke-linecap="round"/><path d="M22.2 5 L11.8 15.2" stroke="#d6d6d6" stroke-width="1.5" stroke-linecap="round"/><path d="M12.4 13.6 C10 14 9.6 16.8 6.6 17.6 C9.6 18.8 13.4 18 13.8 15 Z" fill="#3d8edb"/></svg>
<svg style="left:719px;top:60.900000000000006px" width="8" height="8" viewBox="-4 -4 8 8"><path d="M-1.938 -0.969 L0 0.969 L1.938 -0.969" fill="none" stroke="#e6e6e6" stroke-width="1.1550000000000002" stroke-linecap="round" stroke-linejoin="round"/></svg>
<span class="t" style="font-family:'Liberation Sans', sans-serif;font-size:7.6px;color:#ececec;top:80px;-webkit-text-stroke:0.17px #ececec;left:703.30px;transform:scaleX(0.9776);transform-origin:left;">Cell</span>
<span class="t" style="font-family:'Liberation Sans', sans-serif;font-size:7.6px;color:#ececec;top:89px;-webkit-text-stroke:0.17px #ececec;left:699.00px;transform:scaleX(1.0586);transform-origin:left;">Styles</span>
<svg style="left:0;top:0" width="1024" height="640" viewBox="0 0 1024 640"><rect x="734.2" y="51" width="1" height="43.5" fill="#474747"/></svg>
<svg style="left:744px;top:54px;" width="12.4" height="10" viewBox="0 0 12.4 10"><path d="M0.5 0.5 H11.9 V9.5 H0.5 Z M0.5 3 H3 M0.5 7 H3 M3.4 7.4 V9.5 M3.4 0.5 V2.6 M7.6 7.4 V9.5 M7.6 0.5 V2.6" fill="none" stroke="#d8d8d8" stroke-width="0.9"/><rect x="4.2" y="3.2" width="7.6" height="3.6" fill="#3d8edb"/><path d="M5 5 H1.2 M2.8 3.2 L1 5 L2.8 6.8" fill="none" stroke="#3d8edb" stroke-width="1" stroke-linecap="round" stroke-linejoin="round" /></svg>
<span class="t" style="font-family:'Liberation Sans', sans-serif;font-size:7.7px;color:#ececec;top:56px;-webkit-text-stroke:0.17px #ececec;left:760.60px;transform:scaleX(1.0398);transform-origin:left;">Insert</span>
<svg style="left:783.5px;top:55.5px" width="8" height="8" viewBox="-4 -4 8 8"><path d="M-1.938 -0.969 L0 0.969 L1.938 -0.969" fill="none" stroke="#e6e6e6" stroke-width="1.1550000000000002" stroke-linecap="round" stroke-linejoin="round"/></svg>
<svg style="left:744px;top:70px;" width="12.4" height="10.4" viewBox="0 0 12.4 10.4"><path d="M0.5 0.7 H11.6 M0.5 0.7 V9.8 M0.5 9.8 H11.6 M0.5 3.6 H3.2 M0.5 7 H11.6 M3.6 7 V9.8 M7.8 7 V9.8" fill="none" stroke="#bdbdbd" stroke-width="0.9"/><rect x="3.2" y="3.4" width="3.4" height="3.4" fill="#3d8edb"/><path d="M7.8 3 L11.4 6.6 M11.4 3 L7.8 6.6" stroke="#d8473d" stroke-width="0.9"/></svg>
<span class="t" style="font-family:'Liberation Sans', sans-serif;font-size:7.7px;color:#ececec;top:72px;-webkit-text-stroke:0.17px #ececec;left:760.60px;transform:scaleX(0.9985);transform-origin:left;">Delete</span>
<svg style="left:786px;top:70.9px" width="8" height="8" viewBox="-4 -4 8 8"><path d="M-1.938 -0.969 L0 0.969 L1.938 -0.969" fill="none" stroke="#e6e6e6" stroke-width="1.1550000000000002" stroke-linecap="round" stroke-linejoin="round"/></svg>
<svg style="left:744px;top:84.5px;" width="12.4" height="11.6" viewBox="0 0 12.4 11.6"><path d="M0.5 2.8 H11.6 V11 H0.5 Z M0.5 5.4 H11.6 M0.5 8.4 H11.6 M3.6 2.8 V11 M8.4 2.8 V11" fill="none" stroke="#d0d0d0" stroke-width="0.9"/><rect x="3.8" y="5.6" width="4.4" height="2.6" fill="#3d8edb"/><path d="M3.4 1 H9.2 L9.2 2" fill="none" stroke="#3d8edb" stroke-width="0.9" stroke-linecap="round" stroke-linejoin="round" /></svg>
<span class="t" style="font-family:'Liberation Sans', sans-serif;font-size:7.7px;color:#ececec;top:87px;-webkit-text-stroke:0.17px #ececec;left:760.60px;transform:scaleX(1.0017);transform-origin:left;">Format</span>
<svg style="left:788.1px;top:86.5px" width="8" height="8" viewBox="-4 -4 8 8"><path d="M-1.938 -0.969 L0 0.969 L1.938 -0.969" fill="none" stroke="#e6e6e6" stroke-width="1.1550000000000002" stroke-linecap="round" stroke-linejoin="round"/></svg>
<svg style="left:0;top:0" width="1024" height="640" viewBox="0 0 1024 640"><rect x="803.0" y="51" width="1" height="43.5" fill="#474747"/></svg>
<svg style="left:814.5px;top:53.2px;" width="10" height="11.5" viewBox="0 0 10 11.5"><path d="M8.4 2.2 V0.8 H0.9 L5 5.4 L0.9 10.2 H8.6 V8.8" fill="none" stroke="#e2e2e2" stroke-width="0.95" stroke-linecap="round" stroke-linejoin="round" /></svg>
<svg style="left:827.3px;top:55.5px" width="8" height="8" viewBox="-4 -4 8 8"><path d="M-1.938 -0.969 L0 0.969 L1.938 -0.969" fill="none" stroke="#e6e6e6" stroke-width="1.1550000000000002" stroke-linecap="round" stroke-linejoin="round"/></svg>
<svg style="left:813px;top:70px;" width="12.4" height="10.4" viewBox="0 0 12.4 10.4"><path d="M0.5 0.6 H11.8 V9.8 H0.5 Z" fill="none" stroke="#cfcfcf" stroke-width="0.9"/><path d="M0.5 2 H11.8" stroke="#cfcfcf" stroke-width="0.7"/><path d="M6.1 3.2 V7.6 M4.2 5.8 L6.1 7.8 L8 5.8" fill="none" stroke="#3d8edb" stroke-width="0.95" stroke-linecap="round" stroke-linejoin="round" /></svg>
<svg style="left:827.3px;top:70.9px" width="8" height="8" viewBox="-4 -4 8 8"><path d="M-1.938 -0.969 L0 0.969 L1.938 -0.969" fill="none" stroke="#e6e6e6" stroke-width="1.1550000000000002" stroke-linecap="round" stroke-linejoin="round"/></svg>
<svg style="left:813.5px;top:84.5px;" width="11.5" height="11.5" viewBox="0 0 11.5 11.5"><path d="M0.8 7.2 L7 1 L10.6 4.6 L4.4 10.8 Z" fill="none" stroke="#c46bd0" stroke-width="1"/><path d="M0.8 7.2 L3.2 4.8 L6.8 8.4 L4.4 10.8 Z" fill="#b34fc4"/></svg>
<svg style="left:827.3px;top:86.5px" width="8" height="8" viewBox="-4 -4 8 8"><path d="M-1.938 -0.969 L0 0.969 L1.938 -0.969" fill="none" stroke="#e6e6e6" stroke-width="1.1550000000000002" stroke-linecap="round" stroke-linejoin="round"/></svg>
<span class="t" style="font-family:'Liberation Sans', sans-serif;font-size:11.4px;color:#3d8edb;top:55px;left:839.60px;transform:scaleX(0.9988);transform-origin:left;">A</span>
<span class="t" style="font-family:'Liberation Sans', sans-serif;font-size:11.4px;color:#e0e0e0;top:65px;left:839.80px;transform:scaleX(1.0332);transform-origin:left;">Z</span>
<svg style="left:847.6px;top:59.6px;" width="13.4" height="12" viewBox="0 0 13.4 12"><path d="M0.7 0.8 H12.4 L7.9 6 V10.9 H5.3 V6 Z" fill="none" stroke="#cfcfcf" stroke-width="0.85" stroke-linecap="butt" stroke-linejoin="miter" /></svg>
<svg style="left:862.9px;top:60.5px" width="8" height="8" viewBox="-4 -4 8 8"><path d="M-1.938 -0.969 L0 0.969 L1.938 -0.969" fill="none" stroke="#e6e6e6" stroke-width="1.1550000000000002" stroke-linecap="round" stroke-linejoin="round"/></svg>
<span class="t" style="font-family:'Liberation Sans', sans-serif;font-size:7.6px;color:#ececec;top:80px;-webkit-text-stroke:0.17px #ececec;left:842.80px;transform:scaleX(1.0659);transform-origin:left;">Sort &amp;</span>
<span class="t" style="font-family:'Liberation Sans', sans-serif;font-size:7.6px;color:#ececec;top:89px;-webkit-text-stroke:0.17px #ececec;left:845.00px;transform:scaleX(1.0548);transform-origin:left;">Filter</span>
<svg style="left:874px;top:54.5px;" width="22" height="21" viewBox="0 0 22 21"><path d="M13.6 0.8 A7.4 7.4 0 1 1 13.59 0.8 Z M8.6 13.4 L1 20.4" fill="none" stroke="#dadada" stroke-width="1" stroke-linecap="round" stroke-linejoin="round" /></svg>
<svg style="left:898.5px;top:60.5px" width="8" height="8" viewBox="-4 -4 8 8"><path d="M-1.938 -0.969 L0 0.969 L1.938 -0.969" fill="none" stroke="#e6e6e6" stroke-width="1.1550000000000002" stroke-linecap="round" stroke-linejoin="round"/></svg>
<span class="t" style="font-family:'Liberation Sans', sans-serif;font-size:7.6px;color:#ececec;top:80px;-webkit-text-stroke:0.17px #ececec;left:877.80px;transform:scaleX(1.0112);transform-origin:left;">Find &amp;</span>
<span class="t" style="font-family:'Liberation Sans', sans-serif;font-size:7.6px;color:#ececec;top:89px;-webkit-text-stroke:0.17px #ececec;left:877.80px;transform:scaleX(1.0422);transform-origin:left;">Select</span>
<svg style="left:0;top:0" width="1024" height="640" viewBox="0 0 1024 640"><rect x="914.2" y="51" width="1" height="43.5" fill="#474747"/></svg>
<svg style="left:925.6px;top:52.6px;" width="24" height="24" viewBox="0 0 24 24"><rect x="0.6" y="0.6" width="22.4" height="22.4" fill="none" stroke="#c4c4c4" stroke-width="1"/><rect x="1.1" y="1.1" width="21.4" height="3.6" fill="#6a6a6a"/><path d="M0.6 4.8 H23 M0.6 10.6 H23 M0.6 16.6 H23 M8 16.6 V23 M15.4 4.8 V23" fill="none" stroke="#8a8a8a" stroke-width="0.8"/><circle cx="10.6" cy="10.2" r="6.9" fill="#2c2c2c" stroke="#e4e4e4" stroke-width="1.1"/><rect x="6.6" y="8.8" width="2.2" height="4.6" fill="#8c8c8c"/><rect x="8.9" y="6" width="2.6" height="7.4" fill="#f0f0f0"/><rect x="11.6" y="7.8" width="2.4" height="5.6" fill="#2f78c4"/><path d="M15.6 15.4 L22.6 22.6" stroke="#e4e4e4" stroke-width="1.3" stroke-linecap="round"/></svg>
<span class="t" style="font-family:'Liberation Sans', sans-serif;font-size:7.6px;color:#ececec;top:80px;-webkit-text-stroke:0.17px #ececec;left:923.10px;transform:scaleX(1.0173);transform-origin:left;">Analyze</span>
<span class="t" style="font-family:'Liberation Sans', sans-serif;font-size:7.6px;color:#ececec;top:89px;-webkit-text-stroke:0.17px #ececec;left:928.80px;transform:scaleX(0.9971);transform-origin:left;">Data</span>
<svg style="left:0;top:0" width="1024" height="640" viewBox="0 0 1024 640"><rect x="960.1" y="51" width="1" height="43.5" fill="#474747"/></svg>
<svg style="left:975px;top:53px;" width="21" height="23" viewBox="0 0 21 23"><path d="M8.4 4.4 H1 V21.4 H14.6 V14" fill="none" stroke="#2e5573" stroke-width="1"/><path d="M3.4 9.4 L8.6 4.2 L15.2 10.8 L10 16 Z" fill="none" stroke="#2e5573" stroke-width="1"/><path d="M6 9.4 L10.8 14.2 M7.4 8 L12.2 12.8 M8.8 6.6 L13.6 11.4" stroke="#2e5573" stroke-width="0.8"/><path d="M10 3.4 L12.8 0.8 L18.8 6.8 L16.2 9.6 Z" fill="#2e5573" stroke="#2e5573" stroke-width="1"/></svg>
<svg style="left:996.5px;top:61px" width="8" height="8" viewBox="-4 -4 8 8"><path d="M-1.938 -0.969 L0 0.969 L1.938 -0.969" fill="none" stroke="#5c5c5c" stroke-width="1.05" stroke-linecap="round" stroke-linejoin="round"/></svg>
<span class="t" style="font-family:'Liberation Sans', sans-serif;font-size:7.6px;color:#7c7c7c;top:80px;-webkit-text-stroke:0.1px #7c7c7c;left:969.40px;transform:scaleX(1.0735);transform-origin:left;">Sensitivity</span>
<span class="t" style="font-family:'Liberation Sans', sans-serif;font-size:8.4px;color:#e4e4e4;top:107px;left:7.40px;transform:scaleX(1.0130);transform-origin:left;">B16</span>
<svg style="left:51px;top:104.5px;" width="7" height="13" viewBox="0 0 7 13"><path d="M3.4 0.6 L6 4.6 H0.8 Z M3.4 12 L6 8 H0.8 Z" fill="#bcbcbc"/></svg>
<svg style="left:0;top:0" width="1024" height="640" viewBox="0 0 1024 640"><rect x="60.3" y="102.5" width="1" height="17" fill="#1c1c1c"/></svg>
<svg style="left:71px;top:107.6px;" width="8" height="8" viewBox="0 0 8 8"><path d="M1 1 L7 7 M7 1 L1 7" fill="none" stroke="#5e5e5e" stroke-width="1.7" stroke-linecap="round" stroke-linejoin="round" /></svg>
<svg style="left:91px;top:107px;" width="10" height="9" viewBox="0 0 10 9"><path d="M0.9 4.6 L3.6 7.6 L9.4 1.2" fill="none" stroke="#5e5e5e" stroke-width="1.7" stroke-linecap="round" stroke-linejoin="round" /></svg>
<span class="t" style="font-family:'Liberation Serif', serif;font-size:11.4px;color:#a8a8a8;top:106px;font-style:italic;left:112.30px;transform:scaleX(1.2751);transform-origin:left;">fx</span>
<svg style="left:0;top:0" width="1024" height="640" viewBox="0 0 1024 640"><rect x="128" y="104.6" width="885" height="13.4" rx="2" fill="#3a3a3a"/></svg>
<svg style="left:1015.5px;top:108.6px;" width="7" height="6" viewBox="0 0 7 6"><path d="M0.5 0.6 H5.9 L3.2 4.8 Z" fill="#c8c8c8"/></svg>
<svg style="left:9px;top:608px;" width="24" height="12" viewBox="0 0 24 12"><path d="M7 3.9 V10.8 L1.6 7.3 Z" fill="#666666"/><path d="M17.9 3.9 V10.8 L23.3 7.3 Z" fill="#666666"/></svg>
<div style="left:43.1px;top:605px;width:56px;height:15.9px;background:#ffffff;border-radius:0 0 2.5px 2.5px;"></div>
<span class="t" style="font-family:'Liberation Sans', sans-serif;font-size:8.3px;color:#2c8553;top:610px;font-weight:700;left:57.00px;transform:scaleX(1.0103);transform-origin:left;">Sheet1</span>
<svg style="left:109px;top:610.5px;" width="9" height="9" viewBox="0 0 9 9"><path d="M4.1 0.6 V7.6 M0.5 4.1 H7.7" fill="none" stroke="#d6d6d6" stroke-width="1.5" stroke-linecap="butt" stroke-linejoin="miter" /></svg>
<svg style="left:0;top:0" width="1024" height="640" viewBox="0 0 1024 640"><rect x="125.8" y="606.3" width="1" height="13.7" fill="#4a4a4a"/></svg>
<span class="t" style="font-family:'Liberation Sans', sans-serif;font-size:8.0px;color:#e6e6e6;top:629px;-webkit-text-stroke:0.12px #e6e6e6;left:17.70px;transform:scaleX(1.0378);transform-origin:left;">Ready</span>
<svg style="left:0;top:0" width="1024" height="640" viewBox="0 0 1024 640"><rect x="797.6" y="623.5" width="25" height="16" fill="#565656"/></svg>
<svg style="left:806px;top:627px;" width="10" height="10" viewBox="0 0 10 10"><path d="M0.6 0.6 H9 V9 H0.6 Z M0.6 3.4 H9 M0.6 6.2 H9 M3.4 0.6 V9 M6.2 0.6 V9" fill="none" stroke="#f0f0f0" stroke-width="0.9"/></svg>
<svg style="left:830.5px;top:627px;" width="10" height="10" viewBox="0 0 10 10"><path d="M0.6 0.6 H9 V9 H0.6 Z" fill="none" stroke="#f0f0f0" stroke-width="1.1"/><path d="M2.8 2.6 V6.8 H6.8 V2.6 M4.8 2.6 V5" fill="none" stroke="#f0f0f0" stroke-width="0.9"/></svg>
<svg style="left:856px;top:627px;" width="10" height="10" viewBox="0 0 10 10"><path d="M0.6 0.6 H9 V9 H0.6 Z" fill="none" stroke="#f0f0f0" stroke-width="1.1"/><path d="M3.2 0.6 V4.8 H6.4 V0.6" fill="none" stroke="#f0f0f0" stroke-width="0.9"/></svg>
<svg style="left:0;top:0" width="1024" height="640" viewBox="0 0 1024 640"><rect x="880" y="631.5" width="5" height="1.6" fill="#e8e8e8"/><rect x="890.5" y="631.3" width="70.5" height="2" rx="1" fill="#8c8c8c"/><rect x="922.5" y="626.7" width="11.2" height="11.2" rx="5.6" fill="#b8b8b8"/></svg>
<svg style="left:965.5px;top:628.5px;" width="8" height="8" viewBox="0 0 8 8"><path d="M3.8 0.9 V6.7 M0.9 3.8 H6.7" fill="none" stroke="#f0f0f0" stroke-width="1.5" stroke-linecap="butt" stroke-linejoin="miter" /></svg>
<span class="t" style="font-family:'Liberation Sans', sans-serif;font-size:7.8px;color:#dcdcdc;top:629px;-webkit-text-stroke:0.1px #dcdcdc;left:984.80px;transform:scaleX(1.0625);transform-origin:left;">125%</span>
</div></body></html>
